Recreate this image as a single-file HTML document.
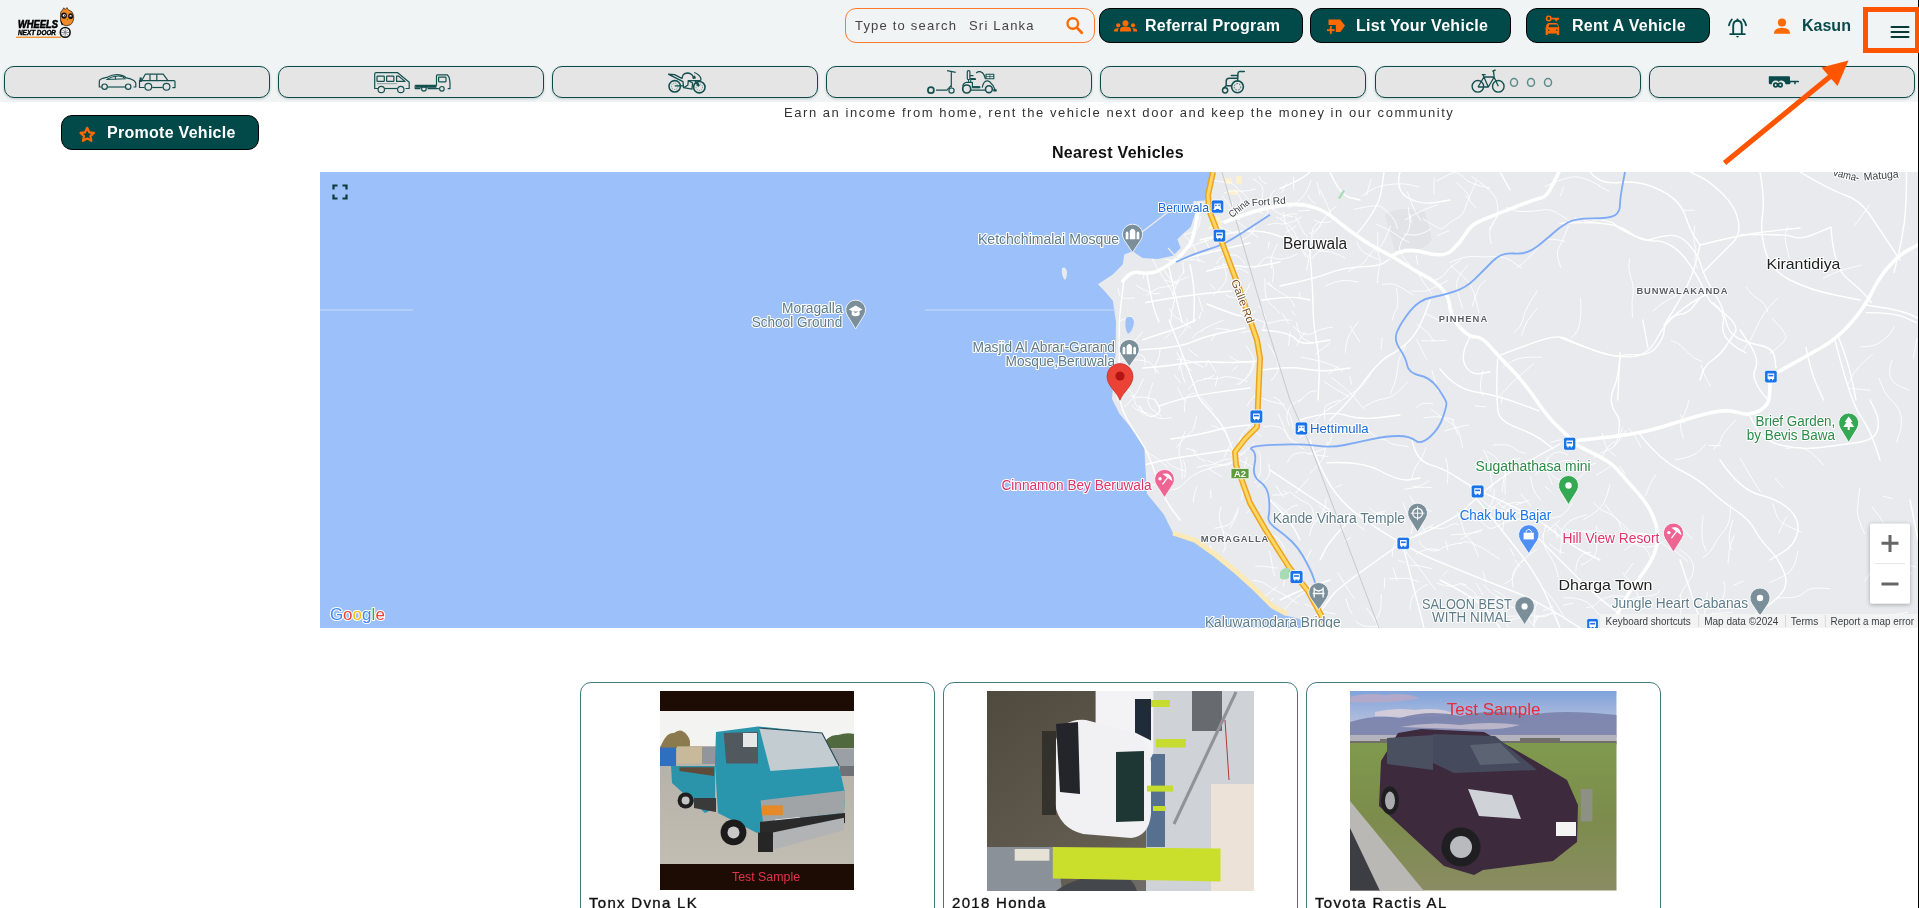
<!DOCTYPE html>
<html><head><meta charset="utf-8">
<style>
*{box-sizing:border-box;margin:0;padding:0}
html,body{width:1919px;height:908px;overflow:hidden;background:#fff;font-family:"Liberation Sans",sans-serif}
body>*{will-change:transform}
.abs{position:absolute;white-space:nowrap}
#hdr{position:absolute;left:0;top:0;width:1919px;height:102px;background:#f0f4f5}
.search{position:absolute;left:845px;top:8px;width:250px;height:35px;border:1px solid #ff7a2a;border-radius:11px}
.ph{position:absolute;top:18px;font-size:13px;color:#444;letter-spacing:1.2px;white-space:nowrap}
.tbtn{position:absolute;top:8px;height:35px;background:#024a4a;border:1px solid #000;border-radius:11px}
.bt{position:absolute;color:#fff;font-weight:bold;font-size:16px;letter-spacing:0.28px;white-space:nowrap}
.cat{position:absolute;top:66px;width:266px;height:32px;background:#e5e5e5;border:1.5px solid #0b4a4a;border-radius:10px;box-shadow:0 1px 3px rgba(0,0,0,0.18)}
.card{position:absolute;top:682px;width:355px;height:260px;border:1.5px solid #3f7d7d;border-radius:11px;background:#fff}
.ttl{position:absolute;top:894px;font-weight:normal;font-size:15px;color:#111;white-space:nowrap;letter-spacing:1.3px;-webkit-text-stroke:0.35px #111}
#ov{position:absolute;left:0;top:0}
.ml{font-family:"Liberation Sans",sans-serif;paint-order:stroke;stroke:#fff;stroke-width:2.2px;stroke-linejoin:round}
</style></head><body>
<div id="hdr">
  <div class="search"></div>
  <div class="tbtn" style="left:1099px;width:204px"></div>
  <div class="tbtn" style="left:1310px;width:201px"></div>
  <div class="tbtn" style="left:1526px;width:184px"></div>
  <div class="cat" style="left:4px"></div>
  <div class="cat" style="left:278px"></div>
  <div class="cat" style="left:552px"></div>
  <div class="cat" style="left:826px"></div>
  <div class="cat" style="left:1100px"></div>
  <div class="cat" style="left:1375px"></div>
  <div class="cat" style="left:1649px"></div>
</div>
<div class="tbtn" style="left:61px;top:115px;width:198px;height:35px"></div>
<div class="card" style="left:580px"></div>
<div class="card" style="left:943px"></div>
<div class="card" style="left:1306px"></div>
<svg id="ov" width="1919" height="908" viewBox="0 0 1919 908">
<clipPath id="mc"><rect x="320" y="172" width="1598" height="456"/></clipPath>
<g clip-path="url(#mc)">
<rect x="320" y="172" width="1598" height="456" fill="#e8eaed"/>
<path d="M1385,215 Q1400,205 1425,212 L1432,240 Q1420,255 1395,250 Z" fill="#e1e3e7"/>
<path d="M1224,178 h8 v6 h-8z M1236,176 h6 v8 h-6z M1228,190 h10 v5 h-10z M1210,222 q3,-6 10,-6 l2,14 q-7,2 -12,-2z" fill="#fbf0cf"/>
<path d="M1178.1,283.2 L1164.4,280.2" fill="none" stroke="#fff" stroke-width="1" stroke-opacity="0.85" stroke-linecap="round"/>
<path d="M1228.6,450.1 L1236.8,455.4" fill="none" stroke="#fff" stroke-width="1" stroke-opacity="0.85" stroke-linecap="round"/>
<path d="M1132.7,343.4 L1142.8,331.8" fill="none" stroke="#fff" stroke-width="1" stroke-opacity="0.85" stroke-linecap="round"/>
<path d="M1228.7,263.6 L1213.6,267.9" fill="none" stroke="#fff" stroke-width="1" stroke-opacity="0.85" stroke-linecap="round"/>
<path d="M1282.4,313.7 L1288.4,323.3" fill="none" stroke="#fff" stroke-width="1" stroke-opacity="0.85" stroke-linecap="round"/>
<path d="M1248.0,272.7 Q1240.2,268.0 1237.5,268.8 L1234.7,269.5" fill="none" stroke="#fff" stroke-width="1" stroke-opacity="0.85" stroke-linecap="round"/>
<path d="M1155.2,399.7 Q1145.5,396.6 1141.0,397.2 Q1136.6,397.9 1133.3,396.7 L1130.1,395.5" fill="none" stroke="#fff" stroke-width="1" stroke-opacity="0.85" stroke-linecap="round"/>
<path d="M1131.0,316.1 L1119.0,321.3" fill="none" stroke="#fff" stroke-width="1" stroke-opacity="0.85" stroke-linecap="round"/>
<path d="M1196.5,416.6 Q1194.5,426.0 1193.5,428.8 Q1192.6,431.5 1187.3,435.8 Q1182.0,440.1 1179.5,443.6 L1176.9,447.2" fill="none" stroke="#fff" stroke-width="1" stroke-opacity="0.85" stroke-linecap="round"/>
<path d="M1211.9,425.3 L1226.1,431.1" fill="none" stroke="#fff" stroke-width="1" stroke-opacity="0.85" stroke-linecap="round"/>
<path d="M1244.5,263.3 Q1240.5,256.3 1234.5,255.1 Q1228.4,253.8 1223.8,255.8 Q1219.1,257.7 1217.9,260.6 L1216.8,263.5" fill="none" stroke="#fff" stroke-width="1" stroke-opacity="0.85" stroke-linecap="round"/>
<path d="M1264.8,278.5 Q1265.1,293.5 1265.8,296.9 Q1266.5,300.2 1269.5,302.9 Q1272.5,305.5 1275.9,309.1 L1279.3,312.6" fill="none" stroke="#fff" stroke-width="1" stroke-opacity="0.85" stroke-linecap="round"/>
<path d="M1252.7,467.0 Q1239.3,459.3 1235.8,459.1 Q1232.3,459.0 1228.5,459.0 Q1224.8,459.0 1219.5,461.3 L1214.3,463.6" fill="none" stroke="#fff" stroke-width="1" stroke-opacity="0.85" stroke-linecap="round"/>
<path d="M1215.5,385.9 L1217.6,376.1" fill="none" stroke="#fff" stroke-width="1" stroke-opacity="0.85" stroke-linecap="round"/>
<path d="M1300.6,399.7 Q1291.8,402.9 1289.2,408.3 Q1286.7,413.7 1286.9,416.5 Q1287.1,419.4 1288.3,422.5 L1289.6,425.7" fill="none" stroke="#fff" stroke-width="1" stroke-opacity="0.85" stroke-linecap="round"/>
<path d="M1144.5,272.3 L1143.4,278.0" fill="none" stroke="#fff" stroke-width="1" stroke-opacity="0.85" stroke-linecap="round"/>
<path d="M1188.4,389.6 Q1194.1,381.1 1199.2,380.6 Q1204.4,380.0 1209.1,377.8 L1213.7,375.5" fill="none" stroke="#fff" stroke-width="1" stroke-opacity="0.85" stroke-linecap="round"/>
<path d="M1143.1,414.9 Q1134.3,403.9 1134.7,401.3 Q1135.1,398.7 1132.5,393.9 Q1129.9,389.1 1124.6,387.9 L1119.3,386.7" fill="none" stroke="#fff" stroke-width="1" stroke-opacity="0.85" stroke-linecap="round"/>
<path d="M1218.0,465.3 Q1228.6,463.9 1232.2,461.3 Q1235.8,458.7 1240.3,455.5 L1244.8,452.4" fill="none" stroke="#fff" stroke-width="1" stroke-opacity="0.85" stroke-linecap="round"/>
<path d="M1239.1,384.9 Q1249.2,375.4 1251.3,369.1 L1253.4,362.9" fill="none" stroke="#fff" stroke-width="1" stroke-opacity="0.85" stroke-linecap="round"/>
<path d="M1215.9,328.2 L1229.5,330.0" fill="none" stroke="#fff" stroke-width="1" stroke-opacity="0.85" stroke-linecap="round"/>
<path d="M1152.8,383.1 Q1147.5,397.7 1148.0,401.4 Q1148.5,405.1 1150.8,407.9 L1153.0,410.6" fill="none" stroke="#fff" stroke-width="1" stroke-opacity="0.85" stroke-linecap="round"/>
<path d="M1236.7,448.1 Q1240.9,433.7 1245.6,429.9 Q1250.3,426.1 1252.3,423.6 Q1254.3,421.2 1255.2,414.9 L1256.2,408.5" fill="none" stroke="#fff" stroke-width="1" stroke-opacity="0.85" stroke-linecap="round"/>
<path d="M1288.4,345.5 L1290.2,331.8" fill="none" stroke="#fff" stroke-width="1" stroke-opacity="0.85" stroke-linecap="round"/>
<path d="M1192.2,338.3 Q1195.9,332.5 1199.1,331.6 L1202.3,330.7" fill="none" stroke="#fff" stroke-width="1" stroke-opacity="0.85" stroke-linecap="round"/>
<path d="M1272.3,282.2 Q1274.8,270.2 1272.4,265.2 Q1270.0,260.3 1271.0,257.9 Q1272.0,255.5 1274.6,250.0 L1277.2,244.5" fill="none" stroke="#fff" stroke-width="1" stroke-opacity="0.85" stroke-linecap="round"/>
<path d="M1297.1,345.4 Q1298.4,340.3 1301.8,336.4 L1305.3,332.4" fill="none" stroke="#fff" stroke-width="1" stroke-opacity="0.85" stroke-linecap="round"/>
<path d="M1178.6,369.8 L1182.5,355.3" fill="none" stroke="#fff" stroke-width="1" stroke-opacity="0.85" stroke-linecap="round"/>
<path d="M1204.3,378.3 Q1218.4,379.5 1221.2,377.8 Q1223.9,376.1 1229.2,376.8 Q1234.4,377.4 1240.8,379.5 L1247.3,381.7" fill="none" stroke="#fff" stroke-width="1" stroke-opacity="0.85" stroke-linecap="round"/>
<path d="M1266.3,283.0 L1275.7,289.0" fill="none" stroke="#fff" stroke-width="1" stroke-opacity="0.85" stroke-linecap="round"/>
<path d="M1216.1,372.2 L1208.0,359.9" fill="none" stroke="#fff" stroke-width="1" stroke-opacity="0.85" stroke-linecap="round"/>
<path d="M1152.3,259.3 Q1157.6,269.2 1161.8,275.4 Q1165.9,281.6 1169.2,286.6 Q1172.4,291.5 1173.6,296.6 L1174.8,301.8" fill="none" stroke="#fff" stroke-width="1" stroke-opacity="0.85" stroke-linecap="round"/>
<path d="M1203.2,367.3 Q1192.3,360.8 1184.7,360.0 L1177.0,359.2" fill="none" stroke="#fff" stroke-width="1" stroke-opacity="0.85" stroke-linecap="round"/>
<path d="M1224.1,457.5 Q1227.6,448.6 1230.2,445.3 L1232.9,442.0" fill="none" stroke="#fff" stroke-width="1" stroke-opacity="0.85" stroke-linecap="round"/>
<path d="M1198.5,296.8 L1202.8,311.0" fill="none" stroke="#fff" stroke-width="1" stroke-opacity="0.85" stroke-linecap="round"/>
<path d="M1254.6,395.3 Q1269.1,401.3 1276.7,402.9 L1284.2,404.5" fill="none" stroke="#fff" stroke-width="1" stroke-opacity="0.85" stroke-linecap="round"/>
<path d="M1210.0,467.8 Q1222.6,465.7 1227.1,464.3 L1231.6,462.9" fill="none" stroke="#fff" stroke-width="1" stroke-opacity="0.85" stroke-linecap="round"/>
<path d="M1184.5,270.3 Q1178.1,279.3 1177.3,281.8 Q1176.5,284.2 1174.5,289.8 L1172.5,295.4" fill="none" stroke="#fff" stroke-width="1" stroke-opacity="0.85" stroke-linecap="round"/>
<path d="M1268.7,463.8 Q1270.2,471.6 1269.2,475.0 Q1268.3,478.4 1262.8,482.7 L1257.2,487.0" fill="none" stroke="#fff" stroke-width="1" stroke-opacity="0.85" stroke-linecap="round"/>
<path d="M1246.8,458.1 Q1243.8,470.5 1242.2,472.9 Q1240.7,475.2 1241.6,479.9 Q1242.5,484.7 1242.1,492.4 L1241.7,500.0" fill="none" stroke="#fff" stroke-width="1" stroke-opacity="0.85" stroke-linecap="round"/>
<path d="M1271.3,268.4 L1271.2,260.5" fill="none" stroke="#fff" stroke-width="1" stroke-opacity="0.85" stroke-linecap="round"/>
<path d="M1196.5,451.4 L1186.1,448.3" fill="none" stroke="#fff" stroke-width="1" stroke-opacity="0.85" stroke-linecap="round"/>
<path d="M1136.3,285.5 Q1149.4,293.5 1154.8,293.6 L1160.2,293.7" fill="none" stroke="#fff" stroke-width="1" stroke-opacity="0.85" stroke-linecap="round"/>
<path d="M1201.9,397.9 L1212.2,410.0" fill="none" stroke="#fff" stroke-width="1" stroke-opacity="0.85" stroke-linecap="round"/>
<path d="M1118.6,361.2 Q1126.1,359.5 1132.2,359.7 Q1138.3,359.9 1144.4,360.6 Q1150.5,361.4 1154.7,367.4 L1158.9,373.5" fill="none" stroke="#fff" stroke-width="1" stroke-opacity="0.85" stroke-linecap="round"/>
<path d="M1175.0,297.3 Q1171.6,311.1 1171.2,317.1 L1170.7,323.0" fill="none" stroke="#fff" stroke-width="1" stroke-opacity="0.85" stroke-linecap="round"/>
<path d="M1182.8,262.0 L1183.6,273.8" fill="none" stroke="#fff" stroke-width="1" stroke-opacity="0.85" stroke-linecap="round"/>
<path d="M1199.0,262.2 Q1195.7,248.0 1193.2,244.8 Q1190.6,241.7 1187.8,238.8 L1184.9,235.8" fill="none" stroke="#fff" stroke-width="1" stroke-opacity="0.85" stroke-linecap="round"/>
<path d="M1166.3,461.6 Q1172.4,466.3 1176.2,468.0 Q1180.1,469.7 1182.5,470.2 L1185.0,470.7" fill="none" stroke="#fff" stroke-width="1" stroke-opacity="0.85" stroke-linecap="round"/>
<path d="M1207.6,360.6 L1206.0,366.4" fill="none" stroke="#fff" stroke-width="1" stroke-opacity="0.85" stroke-linecap="round"/>
<path d="M1143.1,379.1 Q1139.6,386.7 1137.0,391.8 Q1134.4,396.9 1129.8,401.7 L1125.2,406.5" fill="none" stroke="#fff" stroke-width="1" stroke-opacity="0.85" stroke-linecap="round"/>
<path d="M1254.6,443.4 Q1244.8,451.8 1241.2,453.7 Q1237.6,455.6 1234.3,455.3 L1231.0,455.0" fill="none" stroke="#fff" stroke-width="1" stroke-opacity="0.85" stroke-linecap="round"/>
<path d="M1254.4,362.9 Q1239.4,362.7 1234.7,359.6 L1230.0,356.6" fill="none" stroke="#fff" stroke-width="1" stroke-opacity="0.85" stroke-linecap="round"/>
<path d="M1118.1,401.0 Q1115.2,395.9 1117.0,390.1 L1118.8,384.4" fill="none" stroke="#fff" stroke-width="1" stroke-opacity="0.85" stroke-linecap="round"/>
<path d="M1188.4,349.3 L1197.9,356.4" fill="none" stroke="#fff" stroke-width="1" stroke-opacity="0.85" stroke-linecap="round"/>
<path d="M1210.4,250.7 L1204.7,239.9" fill="none" stroke="#fff" stroke-width="1" stroke-opacity="0.85" stroke-linecap="round"/>
<path d="M1258.7,305.5 Q1263.2,311.6 1264.6,315.1 Q1265.9,318.6 1264.7,323.5 L1263.5,328.3" fill="none" stroke="#fff" stroke-width="1" stroke-opacity="0.85" stroke-linecap="round"/>
<path d="M1171.0,260.3 L1165.3,259.1" fill="none" stroke="#fff" stroke-width="1" stroke-opacity="0.85" stroke-linecap="round"/>
<path d="M1174.4,374.9 L1180.6,383.2" fill="none" stroke="#fff" stroke-width="1" stroke-opacity="0.85" stroke-linecap="round"/>
<path d="M1134.4,297.9 Q1124.4,299.2 1121.8,297.4 Q1119.1,295.7 1118.7,292.1 L1118.2,288.6" fill="none" stroke="#fff" stroke-width="1" stroke-opacity="0.85" stroke-linecap="round"/>
<path d="M1297.6,253.9 Q1283.3,260.9 1276.2,258.6 Q1269.0,256.3 1266.3,257.5 Q1263.7,258.7 1259.3,263.6 L1255.0,268.6" fill="none" stroke="#fff" stroke-width="1" stroke-opacity="0.85" stroke-linecap="round"/>
<path d="M1185.1,382.7 Q1179.7,369.0 1181.0,365.4 Q1182.2,361.9 1179.7,357.4 L1177.1,352.9" fill="none" stroke="#fff" stroke-width="1" stroke-opacity="0.85" stroke-linecap="round"/>
<path d="M1188.3,276.6 Q1176.4,282.4 1173.4,281.4 Q1170.4,280.4 1167.2,274.9 L1163.9,269.3" fill="none" stroke="#fff" stroke-width="1" stroke-opacity="0.85" stroke-linecap="round"/>
<path d="M1171.5,331.9 L1165.3,338.3" fill="none" stroke="#fff" stroke-width="1" stroke-opacity="0.85" stroke-linecap="round"/>
<path d="M1168.7,260.6 Q1180.6,260.7 1188.4,259.9 Q1196.2,259.0 1200.2,260.6 L1204.1,262.2" fill="none" stroke="#fff" stroke-width="1" stroke-opacity="0.85" stroke-linecap="round"/>
<path d="M1268.1,344.1 Q1276.5,356.6 1277.6,362.0 Q1278.7,367.4 1278.1,370.1 Q1277.5,372.8 1274.4,376.7 L1271.3,380.6" fill="none" stroke="#fff" stroke-width="1" stroke-opacity="0.85" stroke-linecap="round"/>
<path d="M1240.7,313.0 Q1247.5,314.0 1251.3,312.9 L1255.2,311.7" fill="none" stroke="#fff" stroke-width="1" stroke-opacity="0.85" stroke-linecap="round"/>
<path d="M1259.1,393.6 Q1251.7,397.5 1249.5,401.6 L1247.3,405.8" fill="none" stroke="#fff" stroke-width="1" stroke-opacity="0.85" stroke-linecap="round"/>
<path d="M1146.5,295.7 Q1155.1,288.8 1159.3,287.9 Q1163.6,287.0 1168.4,286.4 Q1173.3,285.8 1176.2,283.3 L1179.1,280.8" fill="none" stroke="#fff" stroke-width="1" stroke-opacity="0.85" stroke-linecap="round"/>
<path d="M1223.4,320.2 Q1209.7,325.7 1205.6,328.1 L1201.5,330.5" fill="none" stroke="#fff" stroke-width="1" stroke-opacity="0.85" stroke-linecap="round"/>
<path d="M1217.2,332.9 L1210.6,341.0" fill="none" stroke="#fff" stroke-width="1" stroke-opacity="0.85" stroke-linecap="round"/>
<path d="M1185.2,401.1 Q1181.5,396.4 1179.7,392.1 L1177.8,387.9" fill="none" stroke="#fff" stroke-width="1" stroke-opacity="0.85" stroke-linecap="round"/>
<path d="M1199.2,318.6 L1200.9,312.5" fill="none" stroke="#fff" stroke-width="1" stroke-opacity="0.85" stroke-linecap="round"/>
<path d="M1263.9,426.9 Q1268.5,425.0 1276.0,426.4 Q1283.5,427.9 1287.1,434.1 Q1290.7,440.3 1294.3,441.6 L1298.0,442.9" fill="none" stroke="#fff" stroke-width="1" stroke-opacity="0.85" stroke-linecap="round"/>
<path d="M1145.1,364.9 Q1145.5,359.0 1144.1,356.9 Q1142.7,354.9 1137.1,354.1 Q1131.5,353.3 1127.8,348.0 L1124.2,342.7" fill="none" stroke="#fff" stroke-width="1" stroke-opacity="0.85" stroke-linecap="round"/>
<path d="M1237.2,366.2 L1232.7,370.4" fill="none" stroke="#fff" stroke-width="1" stroke-opacity="0.85" stroke-linecap="round"/>
<path d="M1299.0,292.2 L1300.4,297.1" fill="none" stroke="#fff" stroke-width="1" stroke-opacity="0.85" stroke-linecap="round"/>
<path d="M1204.8,461.0 Q1195.5,456.7 1194.3,453.0 L1193.2,449.3" fill="none" stroke="#fff" stroke-width="1" stroke-opacity="0.85" stroke-linecap="round"/>
<path d="M1252.4,317.6 Q1266.0,323.4 1268.9,323.1 Q1271.8,322.9 1276.4,321.4 Q1281.0,319.8 1286.2,320.0 L1291.4,320.1" fill="none" stroke="#fff" stroke-width="1" stroke-opacity="0.85" stroke-linecap="round"/>
<path d="M1255.1,329.7 L1241.6,332.7" fill="none" stroke="#fff" stroke-width="1" stroke-opacity="0.85" stroke-linecap="round"/>
<path d="M1213.5,295.1 Q1223.4,286.1 1225.4,281.5 Q1227.4,276.8 1225.2,269.8 L1223.1,262.7" fill="none" stroke="#fff" stroke-width="1" stroke-opacity="0.85" stroke-linecap="round"/>
<path d="M1236.6,384.2 Q1245.6,380.9 1249.8,374.4 Q1254.1,368.0 1254.4,363.4 Q1254.7,358.7 1250.4,352.1 L1246.1,345.6" fill="none" stroke="#fff" stroke-width="1" stroke-opacity="0.85" stroke-linecap="round"/>
<path d="M1296.7,322.4 Q1297.2,327.8 1298.8,332.1 Q1300.3,336.4 1303.8,339.0 Q1307.2,341.6 1309.7,342.2 L1312.1,342.8" fill="none" stroke="#fff" stroke-width="1" stroke-opacity="0.85" stroke-linecap="round"/>
<path d="M1183.5,460.2 Q1186.3,469.0 1185.3,473.1 L1184.4,477.1" fill="none" stroke="#fff" stroke-width="1" stroke-opacity="0.85" stroke-linecap="round"/>
<path d="M1132.1,405.2 Q1136.0,411.1 1143.4,412.1 Q1150.8,413.2 1154.4,416.2 Q1158.0,419.3 1164.7,418.5 L1171.4,417.6" fill="none" stroke="#fff" stroke-width="1" stroke-opacity="0.85" stroke-linecap="round"/>
<path d="M1294.4,306.5 Q1291.6,298.0 1284.6,294.8 Q1277.6,291.5 1272.9,286.9 L1268.2,282.2" fill="none" stroke="#fff" stroke-width="1" stroke-opacity="0.85" stroke-linecap="round"/>
<path d="M1295.2,315.4 L1292.0,311.3" fill="none" stroke="#fff" stroke-width="1" stroke-opacity="0.85" stroke-linecap="round"/>
<path d="M1207.7,460.5 Q1220.0,466.5 1226.8,465.1 Q1233.6,463.6 1236.0,459.0 Q1238.5,454.4 1239.5,446.8 L1240.4,439.2" fill="none" stroke="#fff" stroke-width="1" stroke-opacity="0.85" stroke-linecap="round"/>
<path d="M1250.0,283.3 Q1245.8,292.5 1243.3,297.7 Q1240.8,302.9 1241.6,307.5 L1242.4,312.1" fill="none" stroke="#fff" stroke-width="1" stroke-opacity="0.85" stroke-linecap="round"/>
<path d="M1194.5,392.9 Q1188.0,394.6 1186.3,397.2 Q1184.7,399.8 1184.6,405.8 L1184.4,411.7" fill="none" stroke="#fff" stroke-width="1" stroke-opacity="0.85" stroke-linecap="round"/>
<path d="M1197.1,467.5 Q1204.3,465.0 1210.2,464.9 L1216.1,464.9" fill="none" stroke="#fff" stroke-width="1" stroke-opacity="0.85" stroke-linecap="round"/>
<path d="M1260.9,436.3 L1250.1,428.0" fill="none" stroke="#fff" stroke-width="1" stroke-opacity="0.85" stroke-linecap="round"/>
<path d="M1169.5,308.9 Q1172.5,315.4 1175.8,317.3 Q1179.2,319.2 1185.0,323.7 L1190.8,328.2" fill="none" stroke="#fff" stroke-width="1" stroke-opacity="0.85" stroke-linecap="round"/>
<path d="M1178.6,337.1 Q1187.4,328.7 1187.2,323.6 L1187.1,318.6" fill="none" stroke="#fff" stroke-width="1" stroke-opacity="0.85" stroke-linecap="round"/>
<path d="M1160.1,348.6 Q1160.3,356.2 1157.2,361.1 Q1154.1,366.0 1154.8,369.5 L1155.6,373.0" fill="none" stroke="#fff" stroke-width="1" stroke-opacity="0.85" stroke-linecap="round"/>
<path d="M1215.0,289.1 L1210.8,284.6" fill="none" stroke="#fff" stroke-width="1" stroke-opacity="0.85" stroke-linecap="round"/>
<path d="M1235.9,297.9 Q1230.4,297.5 1228.0,296.2 L1225.6,294.9" fill="none" stroke="#fff" stroke-width="1" stroke-opacity="0.85" stroke-linecap="round"/>
<path d="M1293.2,429.2 Q1291.6,416.9 1288.9,413.6 Q1286.3,410.3 1282.5,404.6 Q1278.8,398.8 1276.0,398.1 L1273.3,397.3" fill="none" stroke="#fff" stroke-width="1" stroke-opacity="0.85" stroke-linecap="round"/>
<path d="M1192.1,371.0 L1182.7,363.3" fill="none" stroke="#fff" stroke-width="1" stroke-opacity="0.85" stroke-linecap="round"/>
<path d="M1167.9,467.4 Q1156.2,457.2 1151.2,454.8 Q1146.1,452.3 1144.0,448.0 L1141.9,443.7" fill="none" stroke="#fff" stroke-width="1" stroke-opacity="0.85" stroke-linecap="round"/>
<path d="M1153.5,410.2 L1161.2,416.2" fill="none" stroke="#fff" stroke-width="1" stroke-opacity="0.85" stroke-linecap="round"/>
<path d="M1158.2,484.3 L1148.2,485.5" fill="none" stroke="#fff" stroke-width="1" stroke-opacity="0.85" stroke-linecap="round"/>
<path d="M1171.6,490.0 Q1179.9,488.6 1183.6,483.9 Q1187.3,479.2 1192.7,475.7 Q1198.1,472.2 1205.2,469.9 L1212.2,467.6" fill="none" stroke="#fff" stroke-width="1" stroke-opacity="0.85" stroke-linecap="round"/>
<path d="M1277.1,568.1 Q1263.1,566.0 1259.4,566.1 L1255.7,566.2" fill="none" stroke="#fff" stroke-width="1" stroke-opacity="0.85" stroke-linecap="round"/>
<path d="M1222.9,530.6 Q1226.4,545.9 1224.8,549.0 L1223.3,552.2" fill="none" stroke="#fff" stroke-width="1" stroke-opacity="0.85" stroke-linecap="round"/>
<path d="M1274.8,576.2 Q1272.7,570.3 1272.1,564.8 Q1271.5,559.3 1270.5,555.2 L1269.4,551.2" fill="none" stroke="#fff" stroke-width="1" stroke-opacity="0.85" stroke-linecap="round"/>
<path d="M1233.2,537.3 Q1223.6,533.0 1222.9,530.5 Q1222.2,528.1 1220.3,523.4 Q1218.5,518.7 1219.7,512.9 L1220.9,507.1" fill="none" stroke="#fff" stroke-width="1" stroke-opacity="0.85" stroke-linecap="round"/>
<path d="M1273.8,598.1 L1269.2,602.4" fill="none" stroke="#fff" stroke-width="1" stroke-opacity="0.85" stroke-linecap="round"/>
<path d="M1221.6,476.4 L1208.5,468.9" fill="none" stroke="#fff" stroke-width="1" stroke-opacity="0.85" stroke-linecap="round"/>
<path d="M1255.3,482.6 Q1261.4,472.1 1260.7,469.6 Q1260.0,467.0 1260.5,461.1 Q1261.1,455.3 1259.4,452.7 L1257.7,450.1" fill="none" stroke="#fff" stroke-width="1" stroke-opacity="0.85" stroke-linecap="round"/>
<path d="M1281.7,515.5 Q1290.5,506.6 1294.2,505.9 L1297.8,505.2" fill="none" stroke="#fff" stroke-width="1" stroke-opacity="0.85" stroke-linecap="round"/>
<path d="M1237.7,509.9 Q1232.0,523.7 1228.3,525.0 Q1224.7,526.4 1219.7,527.3 L1214.6,528.3" fill="none" stroke="#fff" stroke-width="1" stroke-opacity="0.85" stroke-linecap="round"/>
<path d="M1238.5,507.5 Q1237.4,514.4 1233.8,521.2 L1230.3,528.0" fill="none" stroke="#fff" stroke-width="1" stroke-opacity="0.85" stroke-linecap="round"/>
<path d="M1283.3,496.7 L1275.7,485.5" fill="none" stroke="#fff" stroke-width="1" stroke-opacity="0.85" stroke-linecap="round"/>
<path d="M1212.5,552.4 L1210.0,545.0" fill="none" stroke="#fff" stroke-width="1" stroke-opacity="0.85" stroke-linecap="round"/>
<path d="M1277.1,586.6 L1264.6,596.4" fill="none" stroke="#fff" stroke-width="1" stroke-opacity="0.85" stroke-linecap="round"/>
<path d="M1210.8,497.9 L1210.7,489.7" fill="none" stroke="#fff" stroke-width="1" stroke-opacity="0.85" stroke-linecap="round"/>
<path d="M1283.3,585.8 Q1284.6,579.3 1285.6,574.5 L1286.6,569.8" fill="none" stroke="#fff" stroke-width="1" stroke-opacity="0.85" stroke-linecap="round"/>
<path d="M1283.3,490.9 L1287.8,493.5" fill="none" stroke="#fff" stroke-width="1" stroke-opacity="0.85" stroke-linecap="round"/>
<path d="M1196.8,486.8 Q1193.8,495.9 1193.6,499.1 L1193.4,502.3" fill="none" stroke="#fff" stroke-width="1" stroke-opacity="0.85" stroke-linecap="round"/>
<path d="M1272.6,495.1 Q1285.3,495.1 1287.6,493.4 L1289.9,491.7" fill="none" stroke="#fff" stroke-width="1" stroke-opacity="0.85" stroke-linecap="round"/>
<path d="M1246.5,512.6 L1251.1,509.4" fill="none" stroke="#fff" stroke-width="1" stroke-opacity="0.85" stroke-linecap="round"/>
<path d="M1282.8,564.0 Q1280.2,556.7 1279.4,554.1 Q1278.6,551.5 1275.3,548.0 Q1272.0,544.6 1271.2,541.9 L1270.5,539.2" fill="none" stroke="#fff" stroke-width="1" stroke-opacity="0.85" stroke-linecap="round"/>
<path d="M1290.5,492.5 Q1301.5,501.1 1305.5,502.4 Q1309.5,503.7 1311.0,506.0 Q1312.5,508.4 1313.7,515.1 L1314.8,521.8" fill="none" stroke="#fff" stroke-width="1" stroke-opacity="0.85" stroke-linecap="round"/>
<path d="M1259.2,543.5 Q1264.4,538.9 1267.9,537.1 Q1271.4,535.3 1274.5,536.0 Q1277.6,536.8 1281.5,543.3 L1285.4,549.8" fill="none" stroke="#fff" stroke-width="1" stroke-opacity="0.85" stroke-linecap="round"/>
<path d="M1182.1,478.3 Q1182.6,465.8 1180.0,458.4 Q1177.4,450.9 1180.2,443.9 Q1183.0,436.8 1184.1,434.1 L1185.2,431.3" fill="none" stroke="#fff" stroke-width="1" stroke-opacity="0.85" stroke-linecap="round"/>
<path d="M1274.7,502.0 Q1279.6,507.1 1284.4,510.3 Q1289.3,513.5 1290.9,520.5 L1292.6,527.5" fill="none" stroke="#fff" stroke-width="1" stroke-opacity="0.85" stroke-linecap="round"/>
<path d="M1297.1,603.0 Q1285.2,595.1 1278.8,591.9 Q1272.3,588.6 1266.9,585.0 Q1261.6,581.3 1257.4,581.0 L1253.2,580.6" fill="none" stroke="#fff" stroke-width="1" stroke-opacity="0.85" stroke-linecap="round"/>
<path d="M1239.6,482.3 Q1241.3,477.2 1239.5,471.5 L1237.8,465.9" fill="none" stroke="#fff" stroke-width="1" stroke-opacity="0.85" stroke-linecap="round"/>
<path d="M1296.4,580.7 Q1307.8,586.0 1311.9,590.8 L1316.1,595.6" fill="none" stroke="#fff" stroke-width="1" stroke-opacity="0.85" stroke-linecap="round"/>
<path d="M1586.8,607.6 Q1594.1,606.7 1596.2,603.7 Q1598.3,600.7 1605.8,597.7 Q1613.3,594.6 1619.9,595.9 L1626.6,597.2" fill="none" stroke="#fff" stroke-width="1" stroke-opacity="0.85" stroke-linecap="round"/>
<path d="M1521.0,494.0 L1530.8,506.1" fill="none" stroke="#fff" stroke-width="1" stroke-opacity="0.85" stroke-linecap="round"/>
<path d="M1403.1,503.3 Q1405.9,511.9 1409.8,518.1 Q1413.7,524.3 1412.3,529.0 L1411.0,533.7" fill="none" stroke="#fff" stroke-width="1" stroke-opacity="0.85" stroke-linecap="round"/>
<path d="M1476.3,600.1 L1460.9,601.6" fill="none" stroke="#fff" stroke-width="1" stroke-opacity="0.85" stroke-linecap="round"/>
<path d="M1481.5,458.5 L1472.0,466.6" fill="none" stroke="#fff" stroke-width="1" stroke-opacity="0.85" stroke-linecap="round"/>
<path d="M1601.8,457.1 Q1607.0,447.1 1610.8,444.3 L1614.6,441.5" fill="none" stroke="#fff" stroke-width="1" stroke-opacity="0.85" stroke-linecap="round"/>
<path d="M1318.9,505.4 Q1331.6,517.6 1337.7,523.9 L1343.8,530.1" fill="none" stroke="#fff" stroke-width="1" stroke-opacity="0.85" stroke-linecap="round"/>
<path d="M1502.3,469.9 Q1498.9,458.4 1493.0,455.0 L1487.0,451.6" fill="none" stroke="#fff" stroke-width="1" stroke-opacity="0.85" stroke-linecap="round"/>
<path d="M1575.8,571.1 Q1576.3,560.8 1580.0,556.9 Q1583.7,553.0 1587.2,552.6 L1590.7,552.2" fill="none" stroke="#fff" stroke-width="1" stroke-opacity="0.85" stroke-linecap="round"/>
<path d="M1308.8,478.7 Q1301.4,486.3 1298.6,489.6 L1295.7,493.0" fill="none" stroke="#fff" stroke-width="1" stroke-opacity="0.85" stroke-linecap="round"/>
<path d="M1486.0,581.8 L1483.1,572.1" fill="none" stroke="#fff" stroke-width="1" stroke-opacity="0.85" stroke-linecap="round"/>
<path d="M1354.4,598.5 Q1349.4,592.2 1345.6,585.5 Q1341.8,578.9 1339.8,575.8 L1337.7,572.7" fill="none" stroke="#fff" stroke-width="1" stroke-opacity="0.85" stroke-linecap="round"/>
<path d="M1609.8,484.7 Q1606.5,499.4 1602.6,504.9 Q1598.7,510.3 1591.2,514.9 L1583.6,519.5" fill="none" stroke="#fff" stroke-width="1" stroke-opacity="0.85" stroke-linecap="round"/>
<path d="M1511.0,505.5 Q1504.9,512.3 1503.8,521.2 L1502.6,530.1" fill="none" stroke="#fff" stroke-width="1" stroke-opacity="0.85" stroke-linecap="round"/>
<path d="M1530.3,476.7 Q1533.4,492.0 1537.2,496.1 L1541.0,500.2" fill="none" stroke="#fff" stroke-width="1" stroke-opacity="0.85" stroke-linecap="round"/>
<path d="M1523.3,460.1 Q1533.9,464.8 1541.7,467.2 Q1549.4,469.7 1551.1,473.7 Q1552.7,477.7 1557.2,479.1 L1561.8,480.6" fill="none" stroke="#fff" stroke-width="1" stroke-opacity="0.85" stroke-linecap="round"/>
<path d="M1390.0,578.8 Q1406.9,577.2 1412.9,579.5 L1418.9,581.8" fill="none" stroke="#fff" stroke-width="1" stroke-opacity="0.85" stroke-linecap="round"/>
<path d="M1447.4,483.0 Q1448.5,468.9 1447.0,463.4 L1445.6,457.8" fill="none" stroke="#fff" stroke-width="1" stroke-opacity="0.85" stroke-linecap="round"/>
<path d="M1519.9,458.4 Q1505.9,462.3 1501.8,464.1 Q1497.6,465.9 1492.0,467.0 Q1486.4,468.1 1481.0,467.4 L1475.5,466.7" fill="none" stroke="#fff" stroke-width="1" stroke-opacity="0.85" stroke-linecap="round"/>
<path d="M1625.6,474.4 L1619.4,465.7" fill="none" stroke="#fff" stroke-width="1" stroke-opacity="0.85" stroke-linecap="round"/>
<path d="M1641.1,447.2 Q1634.3,434.3 1631.4,431.2 L1628.5,428.2" fill="none" stroke="#fff" stroke-width="1" stroke-opacity="0.85" stroke-linecap="round"/>
<path d="M1596.5,525.9 Q1596.9,538.0 1596.8,546.0 Q1596.8,554.0 1592.8,557.8 Q1588.9,561.5 1585.0,563.2 L1581.1,565.0" fill="none" stroke="#fff" stroke-width="1" stroke-opacity="0.85" stroke-linecap="round"/>
<path d="M1437.4,583.4 Q1450.3,587.7 1455.0,585.4 Q1459.8,583.0 1463.1,584.0 L1466.4,584.9" fill="none" stroke="#fff" stroke-width="1" stroke-opacity="0.85" stroke-linecap="round"/>
<path d="M1520.0,566.9 L1514.9,559.9" fill="none" stroke="#fff" stroke-width="1" stroke-opacity="0.85" stroke-linecap="round"/>
<path d="M1629.0,539.1 Q1637.3,547.1 1645.8,547.1 Q1654.4,547.1 1661.0,543.0 Q1667.6,538.8 1674.4,537.8 L1681.2,536.7" fill="none" stroke="#fff" stroke-width="1" stroke-opacity="0.85" stroke-linecap="round"/>
<path d="M1585.1,467.5 Q1576.0,460.3 1569.8,460.3 Q1563.5,460.3 1555.8,462.4 Q1548.0,464.4 1541.7,469.5 L1535.4,474.7" fill="none" stroke="#fff" stroke-width="1" stroke-opacity="0.85" stroke-linecap="round"/>
<path d="M1431.7,487.7 Q1419.9,486.7 1412.2,488.0 L1404.6,489.3" fill="none" stroke="#fff" stroke-width="1" stroke-opacity="0.85" stroke-linecap="round"/>
<path d="M1529.0,500.2 L1515.9,504.9" fill="none" stroke="#fff" stroke-width="1" stroke-opacity="0.85" stroke-linecap="round"/>
<path d="M1625.1,600.6 Q1639.8,596.2 1647.8,595.9 Q1655.8,595.5 1657.7,593.0 L1659.5,590.5" fill="none" stroke="#fff" stroke-width="1" stroke-opacity="0.85" stroke-linecap="round"/>
<path d="M1633.1,563.3 L1625.4,573.7" fill="none" stroke="#fff" stroke-width="1" stroke-opacity="0.85" stroke-linecap="round"/>
<path d="M1365.0,525.0 Q1376.4,512.6 1380.4,512.1 L1384.4,511.6" fill="none" stroke="#fff" stroke-width="1" stroke-opacity="0.85" stroke-linecap="round"/>
<path d="M1512.9,586.9 Q1511.6,578.6 1513.2,572.7 Q1514.9,566.7 1519.5,563.5 L1524.1,560.2" fill="none" stroke="#fff" stroke-width="1" stroke-opacity="0.85" stroke-linecap="round"/>
<path d="M1494.3,489.7 Q1494.2,501.4 1490.2,505.8 L1486.3,510.2" fill="none" stroke="#fff" stroke-width="1" stroke-opacity="0.85" stroke-linecap="round"/>
<path d="M1545.1,486.4 L1551.1,491.5" fill="none" stroke="#fff" stroke-width="1" stroke-opacity="0.85" stroke-linecap="round"/>
<path d="M1543.6,533.6 Q1542.0,543.9 1547.0,551.0 Q1552.1,558.2 1554.6,564.6 Q1557.1,571.0 1557.7,574.1 L1558.2,577.2" fill="none" stroke="#fff" stroke-width="1" stroke-opacity="0.85" stroke-linecap="round"/>
<path d="M1538.9,615.1 L1533.3,625.9" fill="none" stroke="#fff" stroke-width="1" stroke-opacity="0.85" stroke-linecap="round"/>
<path d="M1614.1,446.4 Q1618.5,437.3 1620.5,432.6 L1622.6,427.8" fill="none" stroke="#fff" stroke-width="1" stroke-opacity="0.85" stroke-linecap="round"/>
<path d="M1483.9,584.9 Q1490.4,592.6 1493.3,594.2 Q1496.2,595.8 1500.8,598.2 Q1505.3,600.6 1506.3,605.5 L1507.4,610.4" fill="none" stroke="#fff" stroke-width="1" stroke-opacity="0.85" stroke-linecap="round"/>
<path d="M1605.5,504.8 Q1614.2,517.7 1618.2,520.5 Q1622.3,523.3 1626.5,528.2 Q1630.8,533.1 1638.5,533.4 L1646.2,533.6" fill="none" stroke="#fff" stroke-width="1" stroke-opacity="0.85" stroke-linecap="round"/>
<path d="M1552.9,606.5 L1543.1,610.9" fill="none" stroke="#fff" stroke-width="1" stroke-opacity="0.85" stroke-linecap="round"/>
<path d="M1316.2,594.5 L1303.3,586.0" fill="none" stroke="#fff" stroke-width="1" stroke-opacity="0.85" stroke-linecap="round"/>
<path d="M1514.1,555.9 L1510.2,548.3" fill="none" stroke="#fff" stroke-width="1" stroke-opacity="0.85" stroke-linecap="round"/>
<path d="M1460.3,583.4 Q1474.7,591.2 1475.8,594.7 L1476.8,598.1" fill="none" stroke="#fff" stroke-width="1" stroke-opacity="0.85" stroke-linecap="round"/>
<path d="M1304.7,603.9 Q1316.3,609.3 1320.9,610.7 Q1325.5,612.1 1330.3,613.0 L1335.1,613.8" fill="none" stroke="#fff" stroke-width="1" stroke-opacity="0.85" stroke-linecap="round"/>
<path d="M1524.6,615.6 L1535.3,627.4" fill="none" stroke="#fff" stroke-width="1" stroke-opacity="0.85" stroke-linecap="round"/>
<path d="M1447.4,570.8 L1443.1,575.2" fill="none" stroke="#fff" stroke-width="1" stroke-opacity="0.85" stroke-linecap="round"/>
<path d="M1507.2,616.3 Q1522.4,615.8 1525.9,615.5 Q1529.4,615.2 1537.7,616.4 Q1546.0,617.6 1550.1,613.9 L1554.2,610.2" fill="none" stroke="#fff" stroke-width="1" stroke-opacity="0.85" stroke-linecap="round"/>
<path d="M1534.3,625.5 Q1534.5,609.1 1535.8,606.2 L1537.0,603.4" fill="none" stroke="#fff" stroke-width="1" stroke-opacity="0.85" stroke-linecap="round"/>
<path d="M1384.8,577.9 L1384.3,588.3" fill="none" stroke="#fff" stroke-width="1" stroke-opacity="0.85" stroke-linecap="round"/>
<path d="M1543.2,467.2 Q1548.9,454.9 1554.3,452.9 Q1559.7,450.9 1563.7,453.0 L1567.7,455.1" fill="none" stroke="#fff" stroke-width="1" stroke-opacity="0.85" stroke-linecap="round"/>
<path d="M1551.0,442.1 L1561.4,439.6" fill="none" stroke="#fff" stroke-width="1" stroke-opacity="0.85" stroke-linecap="round"/>
<path d="M1510.0,620.0 L1519.6,617.8" fill="none" stroke="#fff" stroke-width="1" stroke-opacity="0.85" stroke-linecap="round"/>
<path d="M1554.7,528.3 L1557.4,538.3" fill="none" stroke="#fff" stroke-width="1" stroke-opacity="0.85" stroke-linecap="round"/>
<path d="M1520.4,518.6 Q1503.4,522.1 1498.1,525.6 Q1492.7,529.1 1489.5,528.2 Q1486.2,527.3 1481.5,521.8 L1476.8,516.3" fill="none" stroke="#fff" stroke-width="1" stroke-opacity="0.85" stroke-linecap="round"/>
<path d="M1416.2,553.9 Q1427.9,547.7 1433.3,548.9 L1438.8,550.1" fill="none" stroke="#fff" stroke-width="1" stroke-opacity="0.85" stroke-linecap="round"/>
<path d="M1431.8,568.7 Q1416.6,564.9 1413.7,565.4 L1410.7,565.9" fill="none" stroke="#fff" stroke-width="1" stroke-opacity="0.85" stroke-linecap="round"/>
<path d="M1447.9,550.3 L1445.7,541.1" fill="none" stroke="#fff" stroke-width="1" stroke-opacity="0.85" stroke-linecap="round"/>
<path d="M1493.8,589.9 Q1502.5,594.2 1506.1,598.2 L1509.7,602.2" fill="none" stroke="#fff" stroke-width="1" stroke-opacity="0.85" stroke-linecap="round"/>
<path d="M1624.1,550.2 Q1633.0,543.0 1640.7,541.5 Q1648.4,540.0 1652.8,539.8 Q1657.2,539.5 1663.9,544.5 L1670.6,549.6" fill="none" stroke="#fff" stroke-width="1" stroke-opacity="0.85" stroke-linecap="round"/>
<path d="M1482.7,529.6 Q1474.2,531.1 1467.6,535.2 L1460.9,539.3" fill="none" stroke="#fff" stroke-width="1" stroke-opacity="0.85" stroke-linecap="round"/>
<path d="M1502.3,507.5 Q1509.5,502.2 1515.5,502.4 L1521.4,502.7" fill="none" stroke="#fff" stroke-width="1" stroke-opacity="0.85" stroke-linecap="round"/>
<path d="M1430.1,527.1 Q1442.9,530.2 1447.8,526.6 Q1452.8,523.0 1455.9,523.8 L1459.0,524.6" fill="none" stroke="#fff" stroke-width="1" stroke-opacity="0.85" stroke-linecap="round"/>
<path d="M1603.1,531.4 Q1586.0,531.0 1582.5,531.2 Q1578.9,531.5 1572.4,530.6 L1565.9,529.8" fill="none" stroke="#fff" stroke-width="1" stroke-opacity="0.85" stroke-linecap="round"/>
<path d="M1345.8,598.6 Q1348.9,608.7 1350.5,611.5 L1352.1,614.3" fill="none" stroke="#fff" stroke-width="1" stroke-opacity="0.85" stroke-linecap="round"/>
<path d="M1546.9,531.5 L1559.3,520.8" fill="none" stroke="#fff" stroke-width="1" stroke-opacity="0.85" stroke-linecap="round"/>
<path d="M1622.8,572.8 Q1631.5,582.1 1635.2,590.0 Q1639.0,597.9 1641.8,602.5 L1644.5,607.1" fill="none" stroke="#fff" stroke-width="1" stroke-opacity="0.85" stroke-linecap="round"/>
<path d="M1355.9,621.6 Q1361.8,627.0 1370.4,626.6 L1379.1,626.2" fill="none" stroke="#fff" stroke-width="1" stroke-opacity="0.85" stroke-linecap="round"/>
<path d="M1493.5,445.2 Q1508.8,443.2 1513.8,447.9 Q1518.9,452.5 1522.2,452.9 L1525.6,453.2" fill="none" stroke="#fff" stroke-width="1" stroke-opacity="0.85" stroke-linecap="round"/>
<path d="M1564.2,616.6 Q1557.2,605.6 1553.2,600.0 Q1549.2,594.3 1545.4,590.7 L1541.6,587.1" fill="none" stroke="#fff" stroke-width="1" stroke-opacity="0.85" stroke-linecap="round"/>
<path d="M1431.2,511.4 Q1415.2,505.8 1412.5,500.6 L1409.8,495.5" fill="none" stroke="#fff" stroke-width="1" stroke-opacity="0.85" stroke-linecap="round"/>
<path d="M1579.6,469.5 L1595.5,463.0" fill="none" stroke="#fff" stroke-width="1" stroke-opacity="0.85" stroke-linecap="round"/>
<path d="M1611.0,466.3 L1596.4,475.0" fill="none" stroke="#fff" stroke-width="1" stroke-opacity="0.85" stroke-linecap="round"/>
<path d="M1307.6,454.1 Q1323.1,450.8 1327.5,445.6 Q1332.0,440.5 1331.6,436.2 L1331.2,431.9" fill="none" stroke="#fff" stroke-width="1" stroke-opacity="0.85" stroke-linecap="round"/>
<path d="M1549.8,544.0 Q1556.5,550.3 1560.2,551.6 L1564.0,552.9" fill="none" stroke="#fff" stroke-width="1" stroke-opacity="0.85" stroke-linecap="round"/>
<path d="M1593.8,502.9 Q1597.9,508.9 1603.5,510.9 Q1609.0,513.0 1614.0,516.4 Q1619.1,519.7 1620.8,527.2 L1622.5,534.8" fill="none" stroke="#fff" stroke-width="1" stroke-opacity="0.85" stroke-linecap="round"/>
<path d="M1496.0,597.0 Q1510.3,607.4 1514.8,608.1 L1519.3,608.8" fill="none" stroke="#fff" stroke-width="1" stroke-opacity="0.85" stroke-linecap="round"/>
<path d="M1383.4,513.3 Q1376.7,514.2 1373.2,511.0 L1369.7,507.7" fill="none" stroke="#fff" stroke-width="1" stroke-opacity="0.85" stroke-linecap="round"/>
<path d="M1305.6,591.7 Q1295.6,596.9 1289.9,603.5 L1284.3,610.1" fill="none" stroke="#fff" stroke-width="1" stroke-opacity="0.85" stroke-linecap="round"/>
<path d="M1426.0,447.6 Q1421.7,459.7 1418.7,462.4 Q1415.6,465.2 1413.5,472.1 L1411.5,479.1" fill="none" stroke="#fff" stroke-width="1" stroke-opacity="0.85" stroke-linecap="round"/>
<path d="M1327.7,456.4 Q1312.7,455.0 1309.2,453.5 Q1305.6,452.0 1298.9,453.0 Q1292.3,454.0 1289.8,458.1 L1287.3,462.3" fill="none" stroke="#fff" stroke-width="1" stroke-opacity="0.85" stroke-linecap="round"/>
<path d="M1542.3,537.7 L1545.9,526.0" fill="none" stroke="#fff" stroke-width="1" stroke-opacity="0.85" stroke-linecap="round"/>
<path d="M1398.6,560.2 L1404.3,562.6" fill="none" stroke="#fff" stroke-width="1" stroke-opacity="0.85" stroke-linecap="round"/>
<path d="M1466.8,603.9 Q1456.2,611.1 1453.1,611.9 L1450.0,612.6" fill="none" stroke="#fff" stroke-width="1" stroke-opacity="0.85" stroke-linecap="round"/>
<path d="M1501.2,601.3 Q1503.1,618.8 1505.8,623.1 L1508.6,627.5" fill="none" stroke="#fff" stroke-width="1" stroke-opacity="0.85" stroke-linecap="round"/>
<path d="M1572.7,603.2 L1563.4,605.3" fill="none" stroke="#fff" stroke-width="1" stroke-opacity="0.85" stroke-linecap="round"/>
<path d="M1555.8,523.9 Q1559.2,529.2 1563.2,531.0 L1567.1,532.8" fill="none" stroke="#fff" stroke-width="1" stroke-opacity="0.85" stroke-linecap="round"/>
<path d="M1335.9,487.1 L1341.7,484.8" fill="none" stroke="#fff" stroke-width="1" stroke-opacity="0.85" stroke-linecap="round"/>
<path d="M1558.6,489.1 Q1568.3,481.6 1571.9,481.6 Q1575.5,481.7 1580.5,476.4 Q1585.6,471.1 1588.2,468.4 L1590.7,465.6" fill="none" stroke="#fff" stroke-width="1" stroke-opacity="0.85" stroke-linecap="round"/>
<path d="M1475.3,492.6 Q1486.3,505.0 1490.4,506.5 Q1494.5,508.0 1501.2,509.9 Q1508.0,511.9 1510.5,516.6 L1513.0,521.4" fill="none" stroke="#fff" stroke-width="1" stroke-opacity="0.85" stroke-linecap="round"/>
<path d="M1306.5,559.4 L1311.1,549.7" fill="none" stroke="#fff" stroke-width="1" stroke-opacity="0.85" stroke-linecap="round"/>
<path d="M1571.9,503.6 Q1564.2,516.0 1557.9,516.9 Q1551.6,517.8 1546.9,519.3 L1542.2,520.9" fill="none" stroke="#fff" stroke-width="1" stroke-opacity="0.85" stroke-linecap="round"/>
<path d="M1496.4,501.1 Q1502.8,507.4 1508.6,510.9 Q1514.4,514.4 1520.5,512.9 L1526.5,511.4" fill="none" stroke="#fff" stroke-width="1" stroke-opacity="0.85" stroke-linecap="round"/>
<path d="M1451.6,534.9 Q1462.6,534.3 1471.5,533.0 L1480.4,531.8" fill="none" stroke="#fff" stroke-width="1" stroke-opacity="0.85" stroke-linecap="round"/>
<path d="M1316.4,624.3 L1322.8,624.8" fill="none" stroke="#fff" stroke-width="1" stroke-opacity="0.85" stroke-linecap="round"/>
<path d="M1393.0,567.5 L1397.0,580.4" fill="none" stroke="#fff" stroke-width="1" stroke-opacity="0.85" stroke-linecap="round"/>
<path d="M1482.1,521.5 Q1488.2,517.5 1489.0,513.5 Q1489.8,509.6 1496.9,504.6 L1504.1,499.5" fill="none" stroke="#fff" stroke-width="1" stroke-opacity="0.85" stroke-linecap="round"/>
<path d="M1615.5,455.9 Q1606.1,449.6 1604.2,441.6 L1602.2,433.5" fill="none" stroke="#fff" stroke-width="1" stroke-opacity="0.85" stroke-linecap="round"/>
<path d="M1502.1,491.5 Q1503.8,475.6 1506.2,469.6 Q1508.6,463.6 1511.5,460.6 L1514.4,457.5" fill="none" stroke="#fff" stroke-width="1" stroke-opacity="0.85" stroke-linecap="round"/>
<path d="M1461.3,543.0 Q1445.6,545.2 1441.8,548.4 Q1437.9,551.6 1431.7,550.7 Q1425.5,549.7 1422.2,545.5 L1419.0,541.2" fill="none" stroke="#fff" stroke-width="1" stroke-opacity="0.85" stroke-linecap="round"/>
<path d="M1645.6,495.6 Q1649.7,483.6 1652.7,479.5 L1655.6,475.3" fill="none" stroke="#fff" stroke-width="1" stroke-opacity="0.85" stroke-linecap="round"/>
<path d="M1480.9,596.9 L1468.7,597.3" fill="none" stroke="#fff" stroke-width="1" stroke-opacity="0.85" stroke-linecap="round"/>
<path d="M1537.2,615.6 L1533.4,622.3" fill="none" stroke="#fff" stroke-width="1" stroke-opacity="0.85" stroke-linecap="round"/>
<path d="M1593.6,457.9 Q1600.9,452.2 1607.4,450.1 Q1613.9,448.1 1616.8,443.5 Q1619.6,438.8 1622.9,434.5 L1626.2,430.1" fill="none" stroke="#fff" stroke-width="1" stroke-opacity="0.85" stroke-linecap="round"/>
<path d="M1341.1,514.7 Q1350.9,519.7 1357.5,524.8 L1364.0,529.8" fill="none" stroke="#fff" stroke-width="1" stroke-opacity="0.85" stroke-linecap="round"/>
<path d="M1432.8,525.0 Q1424.3,529.3 1419.3,533.2 Q1414.4,537.1 1409.5,537.9 L1404.6,538.6" fill="none" stroke="#fff" stroke-width="1" stroke-opacity="0.85" stroke-linecap="round"/>
<path d="M1597.3,533.9 Q1585.1,531.5 1579.5,531.6 L1573.9,531.8" fill="none" stroke="#fff" stroke-width="1" stroke-opacity="0.85" stroke-linecap="round"/>
<path d="M1381.2,594.5 Q1381.7,612.0 1378.1,616.2 L1374.4,620.4" fill="none" stroke="#fff" stroke-width="1" stroke-opacity="0.85" stroke-linecap="round"/>
<path d="M1303.7,448.9 Q1295.2,444.5 1291.5,441.4 Q1287.7,438.3 1286.1,433.0 Q1284.4,427.6 1281.4,420.9 L1278.4,414.1" fill="none" stroke="#fff" stroke-width="1" stroke-opacity="0.85" stroke-linecap="round"/>
<path d="M1462.5,447.7 Q1460.0,430.5 1455.3,426.5 Q1450.6,422.5 1446.0,419.9 Q1441.5,417.3 1436.5,413.4 L1431.4,409.5" fill="none" stroke="#fff" stroke-width="1" stroke-opacity="0.85" stroke-linecap="round"/>
<path d="M1607.9,621.3 Q1595.7,612.3 1592.1,606.9 Q1588.4,601.5 1581.2,599.6 Q1573.9,597.8 1568.8,597.8 L1563.6,597.8" fill="none" stroke="#fff" stroke-width="1" stroke-opacity="0.85" stroke-linecap="round"/>
<path d="M1326.3,498.4 Q1324.7,512.6 1318.2,518.8 Q1311.8,524.9 1310.8,530.3 L1309.7,535.8" fill="none" stroke="#fff" stroke-width="1" stroke-opacity="0.85" stroke-linecap="round"/>
<path d="M1401.5,536.2 Q1393.5,543.7 1392.8,550.0 L1392.2,556.4" fill="none" stroke="#fff" stroke-width="1" stroke-opacity="0.85" stroke-linecap="round"/>
<path d="M1499.5,558.7 Q1494.1,555.7 1488.1,551.6 Q1482.1,547.5 1474.3,544.0 Q1466.6,540.6 1463.3,542.2 L1460.1,543.8" fill="none" stroke="#fff" stroke-width="1" stroke-opacity="0.85" stroke-linecap="round"/>
<path d="M1310.3,472.9 Q1322.5,461.8 1323.7,455.9 Q1324.8,449.9 1326.3,446.0 L1327.8,442.1" fill="none" stroke="#fff" stroke-width="1" stroke-opacity="0.85" stroke-linecap="round"/>
<path d="M1350.9,537.5 L1344.7,541.1" fill="none" stroke="#fff" stroke-width="1" stroke-opacity="0.85" stroke-linecap="round"/>
<path d="M1482.9,594.8 L1475.9,582.8" fill="none" stroke="#fff" stroke-width="1" stroke-opacity="0.85" stroke-linecap="round"/>
<path d="M1502.6,467.1 Q1506.4,474.1 1505.6,477.6 Q1504.7,481.1 1505.0,487.6 L1505.2,494.1" fill="none" stroke="#fff" stroke-width="1" stroke-opacity="0.85" stroke-linecap="round"/>
<path d="M1457.4,512.5 Q1462.5,524.5 1463.5,530.0 Q1464.6,535.6 1468.3,538.0 Q1472.1,540.4 1475.2,548.4 L1478.3,556.4" fill="none" stroke="#fff" stroke-width="1" stroke-opacity="0.85" stroke-linecap="round"/>
<path d="M1410.2,609.0 Q1409.8,598.0 1415.9,592.4 Q1422.1,586.8 1425.2,585.4 L1428.3,584.0" fill="none" stroke="#fff" stroke-width="1" stroke-opacity="0.85" stroke-linecap="round"/>
<path d="M1536.2,549.9 Q1522.3,558.9 1518.3,565.5 Q1514.4,572.2 1513.2,576.1 Q1512.1,580.0 1508.4,581.8 L1504.7,583.5" fill="none" stroke="#fff" stroke-width="1" stroke-opacity="0.85" stroke-linecap="round"/>
<path d="M1401.7,545.6 Q1407.2,554.0 1413.0,560.6 Q1418.7,567.2 1423.7,574.1 Q1428.6,581.0 1431.9,585.1 L1435.3,589.3" fill="none" stroke="#fff" stroke-width="1" stroke-opacity="0.85" stroke-linecap="round"/>
<path d="M1420.6,521.9 L1424.8,531.0" fill="none" stroke="#fff" stroke-width="1" stroke-opacity="0.85" stroke-linecap="round"/>
<path d="M1547.1,457.4 Q1546.2,470.0 1549.2,477.1 L1552.3,484.3" fill="none" stroke="#fff" stroke-width="1" stroke-opacity="0.85" stroke-linecap="round"/>
<path d="M1428.8,480.7 Q1421.1,486.4 1416.8,486.4 L1412.6,486.4" fill="none" stroke="#fff" stroke-width="1" stroke-opacity="0.85" stroke-linecap="round"/>
<path d="M1536.4,617.1 Q1549.0,613.9 1553.5,613.6 Q1557.9,613.4 1561.4,615.8 Q1564.9,618.3 1567.9,620.5 L1570.9,622.8" fill="none" stroke="#fff" stroke-width="1" stroke-opacity="0.85" stroke-linecap="round"/>
<path d="M1489.9,490.8 Q1493.1,485.4 1491.8,481.8 Q1490.5,478.1 1490.5,470.8 Q1490.6,463.5 1487.1,456.7 L1483.6,449.9" fill="none" stroke="#fff" stroke-width="1" stroke-opacity="0.85" stroke-linecap="round"/>
<path d="M1365.9,607.6 Q1375.7,619.8 1376.9,623.8 L1378.1,627.7" fill="none" stroke="#fff" stroke-width="1" stroke-opacity="0.85" stroke-linecap="round"/>
<path d="M1585.9,515.0 Q1570.9,518.3 1565.7,524.6 Q1560.5,530.9 1561.2,535.5 Q1562.0,540.1 1561.0,547.1 L1560.0,554.1" fill="none" stroke="#fff" stroke-width="1" stroke-opacity="0.85" stroke-linecap="round"/>
<path d="M1377.3,282.6 Q1377.8,272.6 1379.4,267.0 Q1381.1,261.4 1379.3,257.4 Q1377.6,253.3 1377.7,243.0 L1377.8,232.7" fill="none" stroke="#fff" stroke-width="1" stroke-opacity="0.85" stroke-linecap="round"/>
<path d="M1456.8,182.8 Q1466.5,191.3 1468.2,195.2 L1470.0,199.0" fill="none" stroke="#fff" stroke-width="1" stroke-opacity="0.85" stroke-linecap="round"/>
<path d="M1421.5,340.7 Q1436.6,341.0 1441.7,340.6 L1446.7,340.1" fill="none" stroke="#fff" stroke-width="1" stroke-opacity="0.85" stroke-linecap="round"/>
<path d="M1450.6,265.5 Q1466.4,278.4 1470.3,285.0 Q1474.3,291.6 1476.5,302.1 L1478.8,312.7" fill="none" stroke="#fff" stroke-width="1" stroke-opacity="0.85" stroke-linecap="round"/>
<path d="M1308.2,257.4 Q1298.4,242.3 1292.5,236.1 Q1286.5,229.9 1285.0,221.1 L1283.4,212.2" fill="none" stroke="#fff" stroke-width="1" stroke-opacity="0.85" stroke-linecap="round"/>
<path d="M1361.9,196.1 Q1372.5,188.5 1379.2,186.5 Q1385.9,184.5 1395.6,183.9 Q1405.3,183.4 1412.2,185.2 L1419.0,187.0" fill="none" stroke="#fff" stroke-width="1" stroke-opacity="0.85" stroke-linecap="round"/>
<path d="M1345.3,352.4 Q1346.0,338.6 1352.2,330.1 L1358.5,321.5" fill="none" stroke="#fff" stroke-width="1" stroke-opacity="0.85" stroke-linecap="round"/>
<path d="M1423.0,218.8 Q1435.3,226.8 1438.6,227.9 L1441.9,229.0" fill="none" stroke="#fff" stroke-width="1" stroke-opacity="0.85" stroke-linecap="round"/>
<path d="M1390.6,226.0 Q1384.6,241.9 1380.0,247.1 L1375.5,252.2" fill="none" stroke="#fff" stroke-width="1" stroke-opacity="0.85" stroke-linecap="round"/>
<path d="M1301.3,357.3 Q1318.2,360.3 1326.4,363.1 Q1334.6,366.0 1338.8,368.6 L1342.9,371.3" fill="none" stroke="#fff" stroke-width="1" stroke-opacity="0.85" stroke-linecap="round"/>
<path d="M1326.0,285.8 Q1340.1,279.2 1349.1,280.6 L1358.1,282.0" fill="none" stroke="#fff" stroke-width="1" stroke-opacity="0.85" stroke-linecap="round"/>
<path d="M1325.2,249.5 Q1318.6,250.6 1315.0,254.8 L1311.5,258.9" fill="none" stroke="#fff" stroke-width="1" stroke-opacity="0.85" stroke-linecap="round"/>
<path d="M1368.0,430.1 Q1377.7,439.4 1382.1,439.4 Q1386.4,439.4 1388.3,441.8 Q1390.3,444.2 1399.2,445.4 L1408.1,446.5" fill="none" stroke="#fff" stroke-width="1" stroke-opacity="0.85" stroke-linecap="round"/>
<path d="M1457.8,434.7 L1452.2,419.4" fill="none" stroke="#fff" stroke-width="1" stroke-opacity="0.85" stroke-linecap="round"/>
<path d="M1407.4,382.1 Q1393.9,397.8 1385.9,398.4 Q1377.9,399.0 1370.8,403.1 L1363.7,407.2" fill="none" stroke="#fff" stroke-width="1" stroke-opacity="0.85" stroke-linecap="round"/>
<path d="M1354.1,209.2 Q1373.2,205.4 1377.7,205.7 Q1382.1,205.9 1388.8,213.1 Q1395.4,220.3 1396.4,224.5 L1397.4,228.7" fill="none" stroke="#fff" stroke-width="1" stroke-opacity="0.85" stroke-linecap="round"/>
<path d="M1482.7,370.9 Q1479.1,386.9 1481.1,391.3 L1483.1,395.7" fill="none" stroke="#fff" stroke-width="1" stroke-opacity="0.85" stroke-linecap="round"/>
<path d="M1502.3,396.5 L1501.4,403.1" fill="none" stroke="#fff" stroke-width="1" stroke-opacity="0.85" stroke-linecap="round"/>
<path d="M1438.2,391.7 L1432.2,371.4" fill="none" stroke="#fff" stroke-width="1" stroke-opacity="0.85" stroke-linecap="round"/>
<path d="M1409.9,214.2 L1411.4,222.3" fill="none" stroke="#fff" stroke-width="1" stroke-opacity="0.85" stroke-linecap="round"/>
<path d="M1330.4,342.7 L1314.9,354.6" fill="none" stroke="#fff" stroke-width="1" stroke-opacity="0.85" stroke-linecap="round"/>
<path d="M1348.0,271.8 Q1355.0,267.4 1358.4,266.8 Q1361.8,266.1 1367.4,257.7 Q1373.1,249.3 1376.2,248.8 L1379.2,248.3" fill="none" stroke="#fff" stroke-width="1" stroke-opacity="0.85" stroke-linecap="round"/>
<path d="M1338.8,366.2 L1328.3,374.1" fill="none" stroke="#fff" stroke-width="1" stroke-opacity="0.85" stroke-linecap="round"/>
<path d="M1376.6,224.4 Q1389.7,230.0 1395.6,234.3 Q1401.4,238.6 1405.2,240.4 L1409.1,242.3" fill="none" stroke="#fff" stroke-width="1" stroke-opacity="0.85" stroke-linecap="round"/>
<path d="M1434.0,193.8 L1434.2,178.1" fill="none" stroke="#fff" stroke-width="1" stroke-opacity="0.85" stroke-linecap="round"/>
<path d="M1405.8,345.5 Q1398.2,357.8 1397.7,367.6 Q1397.2,377.4 1393.8,385.6 L1390.3,393.8" fill="none" stroke="#fff" stroke-width="1" stroke-opacity="0.85" stroke-linecap="round"/>
<path d="M1332.3,327.2 Q1320.7,328.6 1315.1,332.1 Q1309.5,335.5 1304.9,334.1 Q1300.3,332.7 1296.9,329.6 L1293.5,326.5" fill="none" stroke="#fff" stroke-width="1" stroke-opacity="0.85" stroke-linecap="round"/>
<path d="M1348.7,396.4 Q1335.9,389.5 1330.2,385.6 L1324.4,381.8" fill="none" stroke="#fff" stroke-width="1" stroke-opacity="0.85" stroke-linecap="round"/>
<path d="M1349.8,325.5 L1359.9,342.3" fill="none" stroke="#fff" stroke-width="1" stroke-opacity="0.85" stroke-linecap="round"/>
<path d="M1476.1,208.0 L1465.5,196.0" fill="none" stroke="#fff" stroke-width="1" stroke-opacity="0.85" stroke-linecap="round"/>
<path d="M1413.3,295.3 Q1395.8,282.9 1389.0,283.7 L1382.3,284.5" fill="none" stroke="#fff" stroke-width="1" stroke-opacity="0.85" stroke-linecap="round"/>
<path d="M1382.1,337.8 L1381.0,349.7" fill="none" stroke="#fff" stroke-width="1" stroke-opacity="0.85" stroke-linecap="round"/>
<path d="M1430.7,229.1 Q1419.9,235.9 1412.0,235.0 L1404.0,234.1" fill="none" stroke="#fff" stroke-width="1" stroke-opacity="0.85" stroke-linecap="round"/>
<path d="M1423.9,417.9 Q1435.5,415.6 1444.7,417.7 L1453.9,419.8" fill="none" stroke="#fff" stroke-width="1" stroke-opacity="0.85" stroke-linecap="round"/>
<path d="M1302.6,240.5 Q1316.2,251.6 1324.0,251.3 Q1331.8,251.0 1338.3,254.6 L1344.8,258.1" fill="none" stroke="#fff" stroke-width="1" stroke-opacity="0.85" stroke-linecap="round"/>
<path d="M1324.9,420.0 Q1323.4,408.4 1325.6,406.1 Q1327.8,403.8 1334.0,402.0 L1340.3,400.1" fill="none" stroke="#fff" stroke-width="1" stroke-opacity="0.85" stroke-linecap="round"/>
<path d="M1407.4,191.8 Q1412.1,205.9 1416.4,213.2 L1420.8,220.4" fill="none" stroke="#fff" stroke-width="1" stroke-opacity="0.85" stroke-linecap="round"/>
<path d="M1331.7,406.6 Q1314.7,419.1 1313.0,424.6 Q1311.2,430.1 1305.3,434.0 L1299.5,437.9" fill="none" stroke="#fff" stroke-width="1" stroke-opacity="0.85" stroke-linecap="round"/>
<path d="M1476.1,181.5 Q1468.2,199.3 1465.5,207.4 Q1462.8,215.5 1458.4,217.5 Q1454.0,219.5 1448.4,223.9 L1442.8,228.4" fill="none" stroke="#fff" stroke-width="1" stroke-opacity="0.85" stroke-linecap="round"/>
<path d="M1416.2,255.4 L1417.8,264.7" fill="none" stroke="#fff" stroke-width="1" stroke-opacity="0.85" stroke-linecap="round"/>
<path d="M1460.0,260.8 Q1450.3,266.0 1446.5,271.8 Q1442.7,277.5 1438.0,279.0 L1433.2,280.5" fill="none" stroke="#fff" stroke-width="1" stroke-opacity="0.85" stroke-linecap="round"/>
<path d="M1433.9,341.1 Q1428.5,332.3 1422.7,328.4 L1416.8,324.5" fill="none" stroke="#fff" stroke-width="1" stroke-opacity="0.85" stroke-linecap="round"/>
<path d="M1425.2,313.5 L1443.7,322.6" fill="none" stroke="#fff" stroke-width="1" stroke-opacity="0.85" stroke-linecap="round"/>
<path d="M1321.0,225.4 L1313.2,234.3" fill="none" stroke="#fff" stroke-width="1" stroke-opacity="0.85" stroke-linecap="round"/>
<path d="M1475.0,405.9 L1485.8,406.9" fill="none" stroke="#fff" stroke-width="1" stroke-opacity="0.85" stroke-linecap="round"/>
<path d="M1462.7,308.4 Q1456.2,289.5 1456.4,283.9 Q1456.6,278.2 1462.2,271.9 L1467.7,265.6" fill="none" stroke="#fff" stroke-width="1" stroke-opacity="0.85" stroke-linecap="round"/>
<path d="M1472.2,307.0 Q1478.2,285.9 1482.1,283.3 L1485.9,280.7" fill="none" stroke="#fff" stroke-width="1" stroke-opacity="0.85" stroke-linecap="round"/>
<path d="M1447.7,280.5 Q1429.4,290.5 1425.2,290.9 Q1421.1,291.3 1416.1,291.1 L1411.1,291.0" fill="none" stroke="#fff" stroke-width="1" stroke-opacity="0.85" stroke-linecap="round"/>
<path d="M1444.9,430.8 Q1459.6,426.4 1464.0,425.8 L1468.4,425.1" fill="none" stroke="#fff" stroke-width="1" stroke-opacity="0.85" stroke-linecap="round"/>
<path d="M1517.2,267.7 Q1531.1,256.9 1536.5,248.8 Q1541.9,240.8 1546.2,239.7 Q1550.4,238.5 1557.6,239.9 L1564.8,241.4" fill="none" stroke="#fff" stroke-width="1" stroke-opacity="0.85" stroke-linecap="round"/>
<path d="M1437.8,235.5 L1449.2,230.5" fill="none" stroke="#fff" stroke-width="1" stroke-opacity="0.85" stroke-linecap="round"/>
<path d="M1432.6,403.6 Q1422.9,402.3 1419.8,404.8 L1416.6,407.3" fill="none" stroke="#fff" stroke-width="1" stroke-opacity="0.85" stroke-linecap="round"/>
<path d="M1316.2,390.8 Q1310.1,390.4 1304.5,396.3 L1298.9,402.2" fill="none" stroke="#fff" stroke-width="1" stroke-opacity="0.85" stroke-linecap="round"/>
<path d="M1371.0,179.4 L1366.5,195.1" fill="none" stroke="#fff" stroke-width="1" stroke-opacity="0.85" stroke-linecap="round"/>
<path d="M1449.4,262.5 Q1466.8,255.5 1474.7,256.4 Q1482.5,257.3 1493.3,256.6 Q1504.2,255.9 1512.8,261.9 L1521.5,267.9" fill="none" stroke="#fff" stroke-width="1" stroke-opacity="0.85" stroke-linecap="round"/>
<path d="M1305.7,256.9 Q1303.0,250.6 1297.3,243.9 Q1291.6,237.2 1287.9,236.2 L1284.3,235.3" fill="none" stroke="#fff" stroke-width="1" stroke-opacity="0.85" stroke-linecap="round"/>
<path d="M1331.4,377.6 Q1341.7,385.2 1347.4,390.4 Q1353.1,395.5 1358.2,402.1 L1363.2,408.6" fill="none" stroke="#fff" stroke-width="1" stroke-opacity="0.85" stroke-linecap="round"/>
<path d="M1372.8,370.6 Q1363.3,386.2 1358.6,388.9 Q1353.9,391.7 1345.1,398.0 Q1336.3,404.3 1331.9,407.1 L1327.5,410.0" fill="none" stroke="#fff" stroke-width="1" stroke-opacity="0.85" stroke-linecap="round"/>
<path d="M1507.0,207.3 Q1513.2,211.7 1524.0,211.6 Q1534.8,211.4 1542.7,209.9 Q1550.6,208.3 1559.6,214.4 L1568.6,220.4" fill="none" stroke="#fff" stroke-width="1" stroke-opacity="0.85" stroke-linecap="round"/>
<path d="M1437.4,204.8 Q1423.2,209.2 1414.2,214.6 L1405.2,220.0" fill="none" stroke="#fff" stroke-width="1" stroke-opacity="0.85" stroke-linecap="round"/>
<path d="M1332.8,219.6 Q1328.0,205.9 1324.2,198.1 L1320.4,190.3" fill="none" stroke="#fff" stroke-width="1" stroke-opacity="0.85" stroke-linecap="round"/>
<path d="M1489.2,229.1 Q1497.8,218.9 1497.8,208.7 Q1497.7,198.5 1491.5,192.2 Q1485.2,185.9 1478.5,181.2 L1471.8,176.6" fill="none" stroke="#fff" stroke-width="1" stroke-opacity="0.85" stroke-linecap="round"/>
<path d="M1490.1,188.1 Q1469.9,184.4 1464.3,178.4 Q1458.7,172.3 1455.5,172.4 Q1452.3,172.5 1444.7,176.7 L1437.0,180.8" fill="none" stroke="#fff" stroke-width="1" stroke-opacity="0.85" stroke-linecap="round"/>
<path d="M1377.9,259.4 Q1368.1,255.0 1364.0,252.5 Q1360.0,250.0 1358.5,246.1 L1357.0,242.1" fill="none" stroke="#fff" stroke-width="1" stroke-opacity="0.85" stroke-linecap="round"/>
<path d="M1491.2,243.6 Q1488.2,233.6 1491.0,227.2 Q1493.7,220.9 1496.6,217.8 L1499.5,214.6" fill="none" stroke="#fff" stroke-width="1" stroke-opacity="0.85" stroke-linecap="round"/>
<path d="M1431.5,293.4 Q1419.6,277.8 1419.1,274.5 L1418.6,271.1" fill="none" stroke="#fff" stroke-width="1" stroke-opacity="0.85" stroke-linecap="round"/>
<path d="M1396.6,288.5 Q1399.0,305.3 1396.7,308.8 Q1394.3,312.3 1393.3,316.2 L1392.3,320.2" fill="none" stroke="#fff" stroke-width="1" stroke-opacity="0.85" stroke-linecap="round"/>
<path d="M1410.6,266.2 Q1399.3,253.6 1399.4,247.9 Q1399.6,242.2 1405.3,235.6 Q1411.0,229.0 1409.6,218.2 L1408.2,207.5" fill="none" stroke="#fff" stroke-width="1" stroke-opacity="0.85" stroke-linecap="round"/>
<path d="M1351.6,384.3 L1349.9,376.3" fill="none" stroke="#fff" stroke-width="1" stroke-opacity="0.85" stroke-linecap="round"/>
<path d="M1426.5,359.2 L1416.7,339.6" fill="none" stroke="#fff" stroke-width="1" stroke-opacity="0.85" stroke-linecap="round"/>
<path d="M1869.7,204.3 Q1861.1,217.0 1857.6,221.3 L1854.1,225.7" fill="none" stroke="#fff" stroke-width="1" stroke-opacity="0.85" stroke-linecap="round"/>
<path d="M1772.0,318.2 Q1786.0,332.1 1785.8,336.6 Q1785.5,341.2 1777.7,347.4 L1769.8,353.5" fill="none" stroke="#fff" stroke-width="1" stroke-opacity="0.85" stroke-linecap="round"/>
<path d="M1609.1,191.4 L1598.9,185.8" fill="none" stroke="#fff" stroke-width="1" stroke-opacity="0.85" stroke-linecap="round"/>
<path d="M1537.2,308.3 Q1529.8,317.5 1527.4,321.1 Q1525.0,324.6 1523.3,330.3 L1521.6,336.0" fill="none" stroke="#fff" stroke-width="1" stroke-opacity="0.85" stroke-linecap="round"/>
<path d="M1683.3,438.2 Q1678.6,425.5 1681.9,419.4 Q1685.2,413.3 1687.1,406.9 L1689.0,400.4" fill="none" stroke="#fff" stroke-width="1" stroke-opacity="0.85" stroke-linecap="round"/>
<path d="M1683.2,210.3 L1694.5,210.2" fill="none" stroke="#fff" stroke-width="1" stroke-opacity="0.85" stroke-linecap="round"/>
<path d="M1913.5,357.9 L1916.8,338.6" fill="none" stroke="#fff" stroke-width="1" stroke-opacity="0.85" stroke-linecap="round"/>
<path d="M1533.4,364.0 Q1519.9,375.3 1513.7,381.4 Q1507.5,387.4 1502.0,393.3 L1496.6,399.2" fill="none" stroke="#fff" stroke-width="1" stroke-opacity="0.85" stroke-linecap="round"/>
<path d="M1777.6,298.1 Q1769.4,305.9 1764.2,313.5 Q1759.1,321.1 1755.6,329.4 Q1752.1,337.6 1747.7,344.0 L1743.3,350.3" fill="none" stroke="#fff" stroke-width="1" stroke-opacity="0.85" stroke-linecap="round"/>
<path d="M1789.5,258.3 Q1783.7,238.2 1785.6,232.7 L1787.5,227.2" fill="none" stroke="#fff" stroke-width="1" stroke-opacity="0.85" stroke-linecap="round"/>
<path d="M1861.4,265.2 Q1839.9,270.0 1831.6,274.1 L1823.3,278.3" fill="none" stroke="#fff" stroke-width="1" stroke-opacity="0.85" stroke-linecap="round"/>
<path d="M1601.5,217.3 Q1592.9,222.6 1587.8,221.3 L1582.7,220.0" fill="none" stroke="#fff" stroke-width="1" stroke-opacity="0.85" stroke-linecap="round"/>
<path d="M1860.6,346.8 Q1873.9,347.2 1881.7,341.4 Q1889.5,335.6 1891.8,331.1 L1894.2,326.6" fill="none" stroke="#fff" stroke-width="1" stroke-opacity="0.85" stroke-linecap="round"/>
<path d="M1560.9,267.6 Q1555.2,254.4 1558.4,248.4 Q1561.6,242.5 1565.0,234.3 L1568.4,226.1" fill="none" stroke="#fff" stroke-width="1" stroke-opacity="0.85" stroke-linecap="round"/>
<path d="M1710.4,385.9 Q1705.8,379.3 1703.4,372.2 L1701.1,365.2" fill="none" stroke="#fff" stroke-width="1" stroke-opacity="0.85" stroke-linecap="round"/>
<path d="M1767.9,312.3 Q1766.1,304.2 1759.3,299.9 Q1752.6,295.7 1749.5,291.4 L1746.5,287.2" fill="none" stroke="#fff" stroke-width="1" stroke-opacity="0.85" stroke-linecap="round"/>
<path d="M1629.3,258.8 Q1627.5,267.9 1630.8,277.4 Q1634.2,286.8 1633.0,293.6 Q1631.7,300.5 1632.1,308.8 L1632.5,317.1" fill="none" stroke="#fff" stroke-width="1" stroke-opacity="0.85" stroke-linecap="round"/>
<path d="M1537.5,290.6 Q1525.1,308.3 1523.7,316.4 Q1522.2,324.5 1518.2,328.4 L1514.1,332.4" fill="none" stroke="#fff" stroke-width="1" stroke-opacity="0.85" stroke-linecap="round"/>
<path d="M1571.5,337.8 Q1578.5,332.2 1579.9,322.3 Q1581.3,312.4 1580.9,305.3 L1580.5,298.2" fill="none" stroke="#fff" stroke-width="1" stroke-opacity="0.85" stroke-linecap="round"/>
<path d="M1685.1,422.8 L1680.0,414.7" fill="none" stroke="#fff" stroke-width="1" stroke-opacity="0.85" stroke-linecap="round"/>
<path d="M1892.2,359.9 Q1888.2,369.5 1890.0,376.1 Q1891.8,382.6 1900.3,386.4 L1908.8,390.1" fill="none" stroke="#fff" stroke-width="1" stroke-opacity="0.85" stroke-linecap="round"/>
<path d="M1735.6,420.1 Q1722.6,433.7 1721.3,438.4 Q1720.1,443.0 1716.8,446.1 L1713.4,449.1" fill="none" stroke="#fff" stroke-width="1" stroke-opacity="0.85" stroke-linecap="round"/>
<path d="M1560.5,195.7 L1563.5,187.4" fill="none" stroke="#fff" stroke-width="1" stroke-opacity="0.85" stroke-linecap="round"/>
<path d="M1541.8,357.2 Q1519.9,356.0 1511.5,361.6 L1503.0,367.1" fill="none" stroke="#fff" stroke-width="1" stroke-opacity="0.85" stroke-linecap="round"/>
<path d="M1653.1,310.9 Q1664.7,301.0 1670.8,298.3 Q1676.9,295.6 1682.0,292.1 L1687.0,288.7" fill="none" stroke="#fff" stroke-width="1" stroke-opacity="0.85" stroke-linecap="round"/>
<path d="M1872.5,354.5 Q1856.8,367.0 1852.3,375.9 L1847.8,384.9" fill="none" stroke="#fff" stroke-width="1" stroke-opacity="0.85" stroke-linecap="round"/>
<path d="M1600.4,186.0 Q1582.1,175.6 1573.2,176.8 Q1564.3,178.0 1554.7,182.2 L1545.1,186.5" fill="none" stroke="#fff" stroke-width="1" stroke-opacity="0.85" stroke-linecap="round"/>
<path d="M1701.7,361.5 Q1693.8,359.4 1686.7,351.5 Q1679.5,343.6 1675.5,342.2 L1671.4,340.9" fill="none" stroke="#fff" stroke-width="1" stroke-opacity="0.85" stroke-linecap="round"/>
<path d="M1694.8,225.7 Q1692.7,239.3 1694.7,244.3 Q1696.7,249.3 1695.3,254.4 Q1693.9,259.5 1695.8,264.0 L1697.6,268.5" fill="none" stroke="#fff" stroke-width="1" stroke-opacity="0.85" stroke-linecap="round"/>
<path d="M1870.2,390.2 L1849.4,388.3" fill="none" stroke="#fff" stroke-width="1" stroke-opacity="0.85" stroke-linecap="round"/>
<path d="M1864.6,533.7 Q1856.8,516.1 1857.2,511.0 Q1857.7,505.9 1858.7,496.9 L1859.7,488.0" fill="none" stroke="#fff" stroke-width="1" stroke-opacity="0.85" stroke-linecap="round"/>
<path d="M1774.8,477.9 L1783.8,488.4" fill="none" stroke="#fff" stroke-width="1" stroke-opacity="0.85" stroke-linecap="round"/>
<path d="M1719.0,610.3 Q1726.1,591.4 1724.9,586.6 L1723.7,581.9" fill="none" stroke="#fff" stroke-width="1" stroke-opacity="0.85" stroke-linecap="round"/>
<path d="M1769.6,582.5 Q1786.1,575.7 1790.3,571.2 Q1794.5,566.6 1796.3,559.0 L1798.1,551.3" fill="none" stroke="#fff" stroke-width="1" stroke-opacity="0.85" stroke-linecap="round"/>
<path d="M1903.4,565.1 L1911.9,574.4" fill="none" stroke="#fff" stroke-width="1" stroke-opacity="0.85" stroke-linecap="round"/>
<path d="M1728.0,563.1 Q1728.9,548.6 1731.5,542.1 L1734.1,535.6" fill="none" stroke="#fff" stroke-width="1" stroke-opacity="0.85" stroke-linecap="round"/>
<path d="M1680.7,595.8 L1680.9,617.7" fill="none" stroke="#fff" stroke-width="1" stroke-opacity="0.85" stroke-linecap="round"/>
<path d="M1743.3,581.1 L1733.4,585.5" fill="none" stroke="#fff" stroke-width="1" stroke-opacity="0.85" stroke-linecap="round"/>
<path d="M1731.2,549.8 Q1727.6,540.5 1730.1,530.5 L1732.6,520.6" fill="none" stroke="#fff" stroke-width="1" stroke-opacity="0.85" stroke-linecap="round"/>
<path d="M1710.9,613.8 L1732.4,612.2" fill="none" stroke="#fff" stroke-width="1" stroke-opacity="0.85" stroke-linecap="round"/>
<path d="M1903.1,563.4 L1915.5,567.0" fill="none" stroke="#fff" stroke-width="1" stroke-opacity="0.85" stroke-linecap="round"/>
<path d="M1679.4,596.4 Q1683.6,588.1 1689.2,580.5 Q1694.9,572.8 1693.4,565.7 Q1691.9,558.6 1685.8,554.0 L1679.8,549.5" fill="none" stroke="#fff" stroke-width="1" stroke-opacity="0.85" stroke-linecap="round"/>
<path d="M1823.3,464.8 Q1817.7,457.7 1810.4,452.2 Q1803.1,446.7 1794.5,447.5 L1785.9,448.3" fill="none" stroke="#fff" stroke-width="1" stroke-opacity="0.85" stroke-linecap="round"/>
<path d="M1651.3,561.2 Q1649.5,551.3 1641.7,544.8 Q1633.9,538.3 1628.5,533.1 L1623.1,528.0" fill="none" stroke="#fff" stroke-width="1" stroke-opacity="0.85" stroke-linecap="round"/>
<path d="M1681.5,527.9 L1692.1,538.7" fill="none" stroke="#fff" stroke-width="1" stroke-opacity="0.85" stroke-linecap="round"/>
<path d="M1703.0,515.9 Q1700.6,536.5 1703.3,543.8 L1706.0,551.0" fill="none" stroke="#fff" stroke-width="1" stroke-opacity="0.85" stroke-linecap="round"/>
<path d="M1675.5,459.9 Q1692.9,457.2 1699.5,450.8 L1706.1,444.3" fill="none" stroke="#fff" stroke-width="1" stroke-opacity="0.85" stroke-linecap="round"/>
<path d="M1720.8,445.8 L1708.7,445.4" fill="none" stroke="#fff" stroke-width="1" stroke-opacity="0.85" stroke-linecap="round"/>
<path d="M1672.6,548.8 L1687.5,561.3" fill="none" stroke="#fff" stroke-width="1" stroke-opacity="0.85" stroke-linecap="round"/>
<path d="M1740.4,458.4 Q1749.8,475.4 1755.0,483.5 L1760.3,491.7" fill="none" stroke="#fff" stroke-width="1" stroke-opacity="0.85" stroke-linecap="round"/>
<path d="M1896.8,442.0 Q1903.4,424.2 1900.8,415.0 Q1898.1,405.9 1892.2,401.0 Q1886.4,396.2 1882.8,387.4 L1879.1,378.5" fill="none" stroke="#fff" stroke-width="1" stroke-opacity="0.85" stroke-linecap="round"/>
<path d="M1704.6,613.9 L1707.3,592.1" fill="none" stroke="#fff" stroke-width="1" stroke-opacity="0.85" stroke-linecap="round"/>
<path d="M1778.6,533.5 L1786.3,516.7" fill="none" stroke="#fff" stroke-width="1" stroke-opacity="0.85" stroke-linecap="round"/>
<path d="M1703.3,557.5 Q1711.1,552.5 1713.5,546.5 Q1716.0,540.5 1722.9,532.2 Q1729.8,524.0 1730.2,514.8 L1730.5,505.6" fill="none" stroke="#fff" stroke-width="1" stroke-opacity="0.85" stroke-linecap="round"/>
<path d="M1872.0,616.2 Q1891.6,615.1 1899.7,613.7 L1907.7,612.3" fill="none" stroke="#fff" stroke-width="1" stroke-opacity="0.85" stroke-linecap="round"/>
<path d="M1883.4,496.2 L1892.0,498.5" fill="none" stroke="#fff" stroke-width="1" stroke-opacity="0.85" stroke-linecap="round"/>
<path d="M1865.0,581.1 Q1870.5,571.9 1873.3,567.0 L1876.2,562.1" fill="none" stroke="#fff" stroke-width="1" stroke-opacity="0.85" stroke-linecap="round"/>
<path d="M1893.4,568.8 Q1886.0,553.2 1886.5,544.8 Q1887.0,536.4 1886.0,530.1 Q1884.9,523.8 1878.5,515.3 L1872.0,506.9" fill="none" stroke="#fff" stroke-width="1" stroke-opacity="0.85" stroke-linecap="round"/>
<path d="M1830.1,588.9 Q1811.1,586.3 1805.7,591.3 Q1800.2,596.3 1795.5,597.1 Q1790.7,597.9 1783.8,597.8 L1776.9,597.7" fill="none" stroke="#fff" stroke-width="1" stroke-opacity="0.85" stroke-linecap="round"/>
<path d="M1772.6,503.1 Q1776.5,516.0 1778.8,519.5 Q1781.1,523.1 1791.1,527.5 L1801.1,532.0" fill="none" stroke="#fff" stroke-width="1" stroke-opacity="0.85" stroke-linecap="round"/>
<path d="M1315.6,203.8 Q1310.5,200.5 1309.4,198.1 L1308.3,195.6" fill="none" stroke="#fff" stroke-width="1" stroke-opacity="0.85" stroke-linecap="round"/>
<path d="M1223.9,193.2 Q1229.5,189.9 1235.6,190.9 Q1241.7,191.8 1248.4,190.5 L1255.1,189.2" fill="none" stroke="#fff" stroke-width="1" stroke-opacity="0.85" stroke-linecap="round"/>
<path d="M1241.4,240.3 Q1252.7,234.6 1253.6,230.4 L1254.5,226.2" fill="none" stroke="#fff" stroke-width="1" stroke-opacity="0.85" stroke-linecap="round"/>
<path d="M1311.0,180.1 Q1307.6,191.2 1303.0,196.4 Q1298.5,201.7 1293.5,204.8 L1288.6,207.9" fill="none" stroke="#fff" stroke-width="1" stroke-opacity="0.85" stroke-linecap="round"/>
<path d="M1217.6,230.8 Q1216.2,236.3 1212.2,238.4 Q1208.3,240.6 1204.2,241.4 Q1200.2,242.3 1195.3,244.6 L1190.5,246.9" fill="none" stroke="#fff" stroke-width="1" stroke-opacity="0.85" stroke-linecap="round"/>
<path d="M1267.9,224.8 Q1277.1,222.5 1279.4,223.6 Q1281.7,224.7 1288.0,223.1 Q1294.3,221.5 1297.8,219.2 L1301.3,216.9" fill="none" stroke="#fff" stroke-width="1" stroke-opacity="0.85" stroke-linecap="round"/>
<path d="M1266.6,183.9 Q1261.6,182.0 1260.4,179.2 L1259.2,176.3" fill="none" stroke="#fff" stroke-width="1" stroke-opacity="0.85" stroke-linecap="round"/>
<path d="M1276.4,217.0 Q1282.3,219.9 1287.7,224.2 Q1293.0,228.6 1294.4,231.9 Q1295.8,235.2 1296.6,237.7 L1297.4,240.2" fill="none" stroke="#fff" stroke-width="1" stroke-opacity="0.85" stroke-linecap="round"/>
<path d="M1253.0,178.6 Q1261.1,183.4 1262.3,187.4 Q1263.6,191.3 1262.4,195.1 Q1261.3,198.9 1263.6,203.0 L1265.9,207.1" fill="none" stroke="#fff" stroke-width="1" stroke-opacity="0.85" stroke-linecap="round"/>
<path d="M1269.2,241.7 L1268.4,248.1" fill="none" stroke="#fff" stroke-width="1" stroke-opacity="0.85" stroke-linecap="round"/>
<path d="M1222.2,196.3 Q1231.4,206.5 1233.0,210.3 Q1234.5,214.2 1233.3,217.7 L1232.2,221.2" fill="none" stroke="#fff" stroke-width="1" stroke-opacity="0.85" stroke-linecap="round"/>
<path d="M1261.7,220.4 Q1265.5,215.8 1267.5,212.0 Q1269.5,208.2 1269.9,201.4 Q1270.3,194.6 1272.8,192.2 L1275.2,189.8" fill="none" stroke="#fff" stroke-width="1" stroke-opacity="0.85" stroke-linecap="round"/>
<path d="M1258.5,237.3 Q1253.7,234.9 1250.1,231.6 Q1246.5,228.2 1241.3,224.6 L1236.1,221.1" fill="none" stroke="#fff" stroke-width="1" stroke-opacity="0.85" stroke-linecap="round"/>
<path d="M1281.9,192.3 L1286.5,183.6" fill="none" stroke="#fff" stroke-width="1" stroke-opacity="0.85" stroke-linecap="round"/>
<path d="M1239.7,219.0 Q1227.0,221.6 1224.1,221.6 L1221.2,221.7" fill="none" stroke="#fff" stroke-width="1" stroke-opacity="0.85" stroke-linecap="round"/>
<path d="M1307.7,237.1 Q1302.9,232.7 1300.8,227.3 Q1298.6,222.0 1297.0,219.4 L1295.4,216.9" fill="none" stroke="#fff" stroke-width="1" stroke-opacity="0.85" stroke-linecap="round"/>
<path d="M1309.4,233.6 Q1317.1,229.8 1319.2,226.3 Q1321.3,222.8 1324.9,217.6 Q1328.6,212.3 1332.4,209.3 L1336.2,206.3" fill="none" stroke="#fff" stroke-width="1" stroke-opacity="0.85" stroke-linecap="round"/>
<path d="M1317.2,182.4 L1320.1,195.4" fill="none" stroke="#fff" stroke-width="1" stroke-opacity="0.85" stroke-linecap="round"/>
<path d="M1200.4,216.8 Q1200.0,225.4 1197.8,228.4 Q1195.5,231.3 1189.7,233.1 L1183.9,234.8" fill="none" stroke="#fff" stroke-width="1" stroke-opacity="0.85" stroke-linecap="round"/>
<path d="M1298.0,211.0 L1309.7,210.3" fill="none" stroke="#fff" stroke-width="1" stroke-opacity="0.85" stroke-linecap="round"/>
<path d="M1284.3,240.5 Q1293.9,244.8 1296.2,246.4 Q1298.6,248.0 1304.7,249.2 Q1310.7,250.5 1314.0,249.4 L1317.3,248.4" fill="none" stroke="#fff" stroke-width="1" stroke-opacity="0.85" stroke-linecap="round"/>
<path d="M1212.2,224.7 L1220.3,226.4" fill="none" stroke="#fff" stroke-width="1" stroke-opacity="0.85" stroke-linecap="round"/>
<path d="M1209.4,237.4 L1202.0,242.7" fill="none" stroke="#fff" stroke-width="1" stroke-opacity="0.85" stroke-linecap="round"/>
<path d="M1258.1,211.3 L1262.9,213.6" fill="none" stroke="#fff" stroke-width="1" stroke-opacity="0.85" stroke-linecap="round"/>
<path d="M1229.9,215.4 Q1240.5,208.6 1241.2,203.8 Q1242.0,198.9 1238.2,194.3 L1234.3,189.7" fill="none" stroke="#fff" stroke-width="1" stroke-opacity="0.85" stroke-linecap="round"/>
<path d="M1265.6,205.1 Q1275.4,211.1 1279.1,213.4 Q1282.7,215.7 1287.8,216.1 L1292.9,216.5" fill="none" stroke="#fff" stroke-width="1" stroke-opacity="0.85" stroke-linecap="round"/>
<path d="M1312.8,249.7 Q1311.6,238.8 1311.8,233.4 Q1312.0,228.0 1315.4,225.2 L1318.8,222.3" fill="none" stroke="#fff" stroke-width="1" stroke-opacity="0.85" stroke-linecap="round"/>
<path d="M1314.5,220.2 Q1319.4,223.6 1325.2,222.6 L1331.1,221.6" fill="none" stroke="#fff" stroke-width="1" stroke-opacity="0.85" stroke-linecap="round"/>
<path d="M1298.2,237.4 L1289.8,247.6" fill="none" stroke="#fff" stroke-width="1" stroke-opacity="0.85" stroke-linecap="round"/>
<path d="M1293.5,176.9 L1293.8,189.4" fill="none" stroke="#fff" stroke-width="1" stroke-opacity="0.85" stroke-linecap="round"/>
<path d="M1297.2,213.9 Q1287.1,213.6 1283.9,216.2 L1280.7,218.8" fill="none" stroke="#fff" stroke-width="1" stroke-opacity="0.85" stroke-linecap="round"/>
<path d="M1296.1,225.9 L1285.9,232.6" fill="none" stroke="#fff" stroke-width="1" stroke-opacity="0.85" stroke-linecap="round"/>
<path d="M1213.3,180.3 Q1222.4,182.3 1226.4,181.9 Q1230.4,181.4 1235.2,185.9 Q1240.0,190.3 1244.5,194.9 L1248.9,199.4" fill="none" stroke="#fff" stroke-width="1" stroke-opacity="0.85" stroke-linecap="round"/>
<path d="M1232.7,202.3 L1231.3,215.7" fill="none" stroke="#fff" stroke-width="1" stroke-opacity="0.85" stroke-linecap="round"/>
<path d="M1236.2,235.6 Q1231.8,230.8 1227.4,230.0 Q1223.1,229.2 1220.6,227.5 Q1218.1,225.8 1213.3,227.1 L1208.6,228.3" fill="none" stroke="#fff" stroke-width="1" stroke-opacity="0.85" stroke-linecap="round"/>
<path d="M1305.7,247.9 L1311.1,252.2" fill="none" stroke="#fff" stroke-width="1" stroke-opacity="0.85" stroke-linecap="round"/>
<path d="M1318.8,239.0 Q1312.0,245.4 1310.8,248.7 Q1309.7,251.9 1308.8,258.4 Q1308.0,264.9 1307.1,267.8 L1306.2,270.6" fill="none" stroke="#fff" stroke-width="1" stroke-opacity="0.85" stroke-linecap="round"/>
<path d="M1124.0,279.0 Q1121.0,304.0 1120.0,313.0 Q1119.0,322.0 1119.3,337.5 Q1119.6,353.0 1118.8,376.0 Q1118.0,399.0 1123.0,410.5 Q1128.0,422.0 1137.0,435.5 Q1146.0,449.0 1150.0,459.5 Q1154.0,470.0 1159.5,485.0 Q1165.0,500.0 1172.5,510.0 L1180.0,520.0" fill="none" stroke="#fff" stroke-width="1.4" stroke-linecap="round"/>
<path d="M1169.0,320.0 Q1182.0,353.0 1188.8,371.0 Q1195.6,389.0 1197.3,394.0 Q1199.0,399.0 1205.5,405.8 Q1212.0,412.5 1217.8,419.8 Q1223.7,427.0 1228.7,439.5 L1233.6,452.0" fill="none" stroke="#fff" stroke-width="1.4" stroke-linecap="round"/>
<path d="M1142.8,339.8 Q1162.6,333.0 1170.8,330.5 Q1179.0,328.0 1187.3,324.0 L1195.6,320.0" fill="none" stroke="#fff" stroke-width="1.4" stroke-linecap="round"/>
<path d="M1141.0,349.7 Q1179.0,348.0 1191.5,342.2 Q1203.9,336.5 1224.5,332.2 L1245.0,328.0" fill="none" stroke="#fff" stroke-width="1.4" stroke-linecap="round"/>
<path d="M1159.0,406.0 Q1179.0,399.0 1195.5,395.9 Q1212.0,392.7 1231.0,390.4 L1250.0,388.0" fill="none" stroke="#fff" stroke-width="1.4" stroke-linecap="round"/>
<path d="M1142.8,368.0 Q1169.0,366.0 1182.3,363.5 Q1195.6,361.0 1212.1,362.0 Q1228.6,363.0 1243.3,362.0 L1258.0,361.0" fill="none" stroke="#fff" stroke-width="1.4" stroke-linecap="round"/>
<path d="M1139.5,406.0 Q1146.0,419.0 1154.3,415.8 Q1162.6,412.5 1158.8,406.2 L1155.0,400.0" fill="none" stroke="#fff" stroke-width="1.4" stroke-linecap="round"/>
<path d="M1171.0,439.0 Q1195.6,435.6 1212.1,431.3 Q1228.6,427.0 1239.3,426.0 L1250.0,425.0" fill="none" stroke="#fff" stroke-width="1.4" stroke-linecap="round"/>
<path d="M1129.5,468.6 Q1162.6,460.0 1179.1,457.5 Q1195.6,455.0 1212.8,452.5 L1230.0,450.0" fill="none" stroke="#fff" stroke-width="1.4" stroke-linecap="round"/>
<path d="M1147.0,274.0 Q1152.0,304.0 1155.5,313.0 L1159.0,322.0" fill="none" stroke="#fff" stroke-width="1.4" stroke-linecap="round"/>
<path d="M1169.0,267.8 Q1175.5,296.0 1178.8,309.0 L1182.0,322.0" fill="none" stroke="#fff" stroke-width="1.4" stroke-linecap="round"/>
<path d="M1145.8,302.5 Q1165.6,299.0 1182.1,296.5 Q1198.6,294.0 1215.2,292.5 L1231.7,291.0" fill="none" stroke="#fff" stroke-width="1.4" stroke-linecap="round"/>
<path d="M1190.0,264.5 Q1195.0,287.6 1194.3,304.8 L1193.7,322.0" fill="none" stroke="#fff" stroke-width="1.4" stroke-linecap="round"/>
<path d="M1175.5,261.0 Q1215.0,251.0 1232.5,247.0 L1250.0,243.0" fill="none" stroke="#fff" stroke-width="1.4" stroke-linecap="round"/>
<path d="M1207.0,271.0 Q1231.7,264.5 1240.8,266.2 Q1250.0,268.0 1265.0,265.0 L1280.0,262.0" fill="none" stroke="#fff" stroke-width="1.4" stroke-linecap="round"/>
<path d="M1207.0,304.0 Q1231.7,314.0 1240.8,316.0 L1250.0,318.0" fill="none" stroke="#fff" stroke-width="1.4" stroke-linecap="round"/>
<path d="M1357.6,233.0 Q1379.0,208.0 1381.5,190.0 L1384.0,172.0" fill="none" stroke="#fff" stroke-width="1.4" stroke-linecap="round"/>
<path d="M1280.0,286.0 Q1313.0,279.0 1327.9,273.4 Q1342.8,267.8 1360.9,266.9 Q1379.0,266.0 1384.0,262.8 L1389.0,259.5" fill="none" stroke="#fff" stroke-width="1.4" stroke-linecap="round"/>
<path d="M1309.7,251.0 Q1313.0,290.0 1313.0,306.0 Q1313.0,322.0 1316.5,341.0 Q1320.0,360.0 1319.0,380.0 L1318.0,400.0" fill="none" stroke="#fff" stroke-width="1.4" stroke-linecap="round"/>
<path d="M1280.0,188.5 Q1300.0,180.0 1305.0,176.0 L1310.0,172.0" fill="none" stroke="#fff" stroke-width="1.4" stroke-linecap="round"/>
<path d="M1262.0,300.0 Q1290.0,296.0 1300.0,298.0 L1310.0,300.0" fill="none" stroke="#fff" stroke-width="1.4" stroke-linecap="round"/>
<path d="M1262.0,330.0 Q1290.0,332.0 1295.0,338.5 Q1300.0,345.0 1315.0,342.5 L1330.0,340.0" fill="none" stroke="#fff" stroke-width="1.4" stroke-linecap="round"/>
<path d="M1262.0,370.0 Q1290.0,366.0 1305.0,369.0 Q1320.0,372.0 1335.0,370.0 L1350.0,368.0" fill="none" stroke="#fff" stroke-width="1.4" stroke-linecap="round"/>
<path d="M1200.0,240.0 Q1230.0,232.0 1246.0,231.0 Q1262.0,230.0 1276.0,235.0 L1290.0,240.0" fill="none" stroke="#fff" stroke-width="1.4" stroke-linecap="round"/>
<path d="M1330.0,172.0 Q1340.0,195.0 1350.0,197.5 L1360.0,200.0" fill="none" stroke="#fff" stroke-width="1.4" stroke-linecap="round"/>
<path d="M1400.0,172.0 Q1395.0,190.0 1407.5,197.5 Q1420.0,205.0 1435.0,202.5 L1450.0,200.0" fill="none" stroke="#fff" stroke-width="1.4" stroke-linecap="round"/>
<path d="M1430.0,300.0 Q1420.0,330.0 1410.0,340.0 Q1400.0,350.0 1390.0,355.0 Q1380.0,360.0 1365.0,380.0 Q1350.0,400.0 1340.0,410.0 L1330.0,420.0" fill="none" stroke="#fff" stroke-width="1.4" stroke-linecap="round"/>
<path d="M1300.0,420.0 Q1330.0,410.0 1345.0,415.0 Q1360.0,420.0 1380.0,417.5 L1400.0,415.0" fill="none" stroke="#fff" stroke-width="1.4" stroke-linecap="round"/>
<path d="M1500.0,172.0 L1510.0,190.0" fill="none" stroke="#fff" stroke-width="1.4" stroke-linecap="round"/>
<path d="M1590.0,172.0 Q1600.0,185.0 1620.0,182.5 Q1640.0,180.0 1660.0,190.0 Q1680.0,200.0 1685.0,215.0 Q1690.0,230.0 1695.0,237.5 L1700.0,245.0" fill="none" stroke="#fff" stroke-width="1.4" stroke-linecap="round"/>
<path d="M1575.0,218.4 Q1610.0,219.0 1615.0,224.5 Q1620.0,230.0 1635.0,236.0 Q1650.0,242.0 1655.0,241.0 Q1660.0,240.0 1670.0,245.0 Q1680.0,250.0 1690.0,265.0 Q1700.0,280.0 1704.0,290.0 Q1708.0,300.0 1714.0,305.0 L1720.0,310.0" fill="none" stroke="#fff" stroke-width="1.4" stroke-linecap="round"/>
<path d="M1700.0,245.0 Q1740.0,235.0 1760.0,232.5 Q1780.0,230.0 1790.0,229.0 L1800.0,228.0" fill="none" stroke="#fff" stroke-width="1.4" stroke-linecap="round"/>
<path d="M1720.0,310.0 Q1740.0,325.0 1735.0,332.5 Q1730.0,340.0 1725.0,347.5 Q1720.0,355.0 1712.5,360.0 Q1705.0,365.0 1702.5,372.5 L1700.0,380.0" fill="none" stroke="#fff" stroke-width="1.4" stroke-linecap="round"/>
<path d="M1700.0,245.0 Q1695.0,270.0 1687.5,285.0 Q1680.0,300.0 1672.0,312.5 L1664.0,325.0" fill="none" stroke="#fff" stroke-width="1.4" stroke-linecap="round"/>
<path d="M1800.0,172.0 Q1830.0,190.0 1845.0,195.0 Q1860.0,200.0 1870.0,215.0 Q1880.0,230.0 1890.0,245.0 L1900.0,260.0" fill="none" stroke="#fff" stroke-width="1.4" stroke-linecap="round"/>
<path d="M1760.0,172.0 Q1765.0,200.0 1762.5,215.0 Q1760.0,230.0 1765.0,250.0 Q1770.0,270.0 1790.0,280.0 Q1810.0,290.0 1835.0,295.0 L1860.0,300.0" fill="none" stroke="#fff" stroke-width="1.4" stroke-linecap="round"/>
<path d="M1866.0,305.0 Q1900.0,310.0 1909.0,314.0 L1918.0,318.0" fill="none" stroke="#fff" stroke-width="1.4" stroke-linecap="round"/>
<path d="M1835.0,340.0 Q1850.0,400.0 1860.0,415.0 Q1870.0,430.0 1875.0,445.0 L1880.0,460.0" fill="none" stroke="#fff" stroke-width="1.4" stroke-linecap="round"/>
<path d="M1499.5,355.3 Q1525.0,345.4 1542.0,339.9 Q1559.0,334.5 1566.9,338.9 Q1574.8,343.4 1594.6,350.4 Q1614.4,357.3 1620.2,355.8 Q1626.0,354.3 1638.0,354.8 Q1650.0,355.3 1657.0,346.4 Q1664.0,337.5 1664.0,331.6 Q1664.0,325.6 1668.9,320.1 Q1673.8,314.7 1680.8,314.2 Q1687.7,313.7 1693.8,305.8 L1700.0,297.8" fill="none" stroke="#fff" stroke-width="1.4" stroke-linecap="round"/>
<path d="M1620.0,357.3 Q1618.0,379.0 1614.2,387.0 Q1610.4,395.0 1611.4,401.9 Q1612.4,408.8 1616.3,413.8 Q1620.3,418.7 1619.2,427.6 L1618.0,436.6" fill="none" stroke="#fff" stroke-width="1.4" stroke-linecap="round"/>
<path d="M1440.0,369.0 Q1456.0,389.0 1475.8,392.0 Q1495.5,395.0 1517.2,402.9 L1539.0,410.8" fill="none" stroke="#fff" stroke-width="1.4" stroke-linecap="round"/>
<path d="M1497.5,359.0 Q1495.5,408.8 1499.5,415.8 Q1503.4,422.7 1519.2,428.6 Q1535.0,434.6 1544.0,441.6 L1553.0,448.5" fill="none" stroke="#fff" stroke-width="1.4" stroke-linecap="round"/>
<path d="M1469.7,337.5 Q1460.0,355.0 1465.0,365.0 Q1470.0,375.0 1480.0,373.5 L1490.0,372.0" fill="none" stroke="#fff" stroke-width="1.4" stroke-linecap="round"/>
<path d="M1310.0,440.0 Q1320.7,471.0 1331.1,486.5 Q1341.4,502.0 1354.7,512.4 Q1368.0,522.8 1381.5,531.1 Q1395.0,539.4 1409.5,547.7 Q1424.0,556.0 1444.8,564.2 Q1465.6,572.5 1486.3,580.8 Q1507.0,589.0 1517.3,593.0 Q1527.7,597.0 1543.8,606.0 Q1560.0,615.0 1570.0,621.5 L1580.0,628.0" fill="none" stroke="#fff" stroke-width="1.4" stroke-linecap="round"/>
<path d="M1327.0,462.8 Q1362.0,460.7 1380.5,471.0 Q1399.0,481.4 1409.5,479.7 L1420.0,478.0" fill="none" stroke="#fff" stroke-width="1.4" stroke-linecap="round"/>
<path d="M1403.5,541.4 Q1453.0,520.7 1464.5,509.4 Q1476.0,498.0 1491.5,485.5 Q1507.0,473.0 1533.5,458.5 L1560.0,444.0" fill="none" stroke="#fff" stroke-width="1.4" stroke-linecap="round"/>
<path d="M1401.0,543.5 Q1341.4,585.0 1334.2,593.2 Q1327.0,601.5 1318.5,614.8 L1310.0,628.0" fill="none" stroke="#fff" stroke-width="1.4" stroke-linecap="round"/>
<path d="M1403.5,547.7 L1424.0,628.0" fill="none" stroke="#fff" stroke-width="1.4" stroke-linecap="round"/>
<path d="M1412.0,440.0 Q1416.0,460.7 1430.5,464.9 Q1445.0,469.0 1458.5,478.3 Q1472.0,487.6 1486.0,493.8 Q1500.0,500.0 1520.0,510.0 Q1540.0,520.0 1555.0,532.5 Q1570.0,545.0 1585.0,552.5 L1600.0,560.0" fill="none" stroke="#fff" stroke-width="1.4" stroke-linecap="round"/>
<path d="M1476.0,498.0 Q1510.0,540.0 1525.0,560.0 Q1540.0,580.0 1550.0,604.0 L1560.0,628.0" fill="none" stroke="#fff" stroke-width="1.4" stroke-linecap="round"/>
<path d="M1530.0,530.0 Q1560.0,560.0 1580.0,580.0 Q1600.0,600.0 1620.0,614.0 L1640.0,628.0" fill="none" stroke="#fff" stroke-width="1.4" stroke-linecap="round"/>
<path d="M1440.0,580.0 Q1480.0,600.0 1490.0,614.0 L1500.0,628.0" fill="none" stroke="#fff" stroke-width="1.4" stroke-linecap="round"/>
<path d="M1350.0,520.0 Q1330.0,540.0 1325.0,550.0 L1320.0,560.0" fill="none" stroke="#fff" stroke-width="1.4" stroke-linecap="round"/>
<path d="M1270.0,470.0 Q1300.0,490.0 1315.0,500.0 L1330.0,510.0" fill="none" stroke="#fff" stroke-width="1.4" stroke-linecap="round"/>
<path d="M1270.0,500.0 Q1290.0,520.0 1295.0,530.0 L1300.0,540.0" fill="none" stroke="#fff" stroke-width="1.4" stroke-linecap="round"/>
<path d="M1280.0,600.0 Q1300.0,590.0 1315.0,585.0 L1330.0,580.0" fill="none" stroke="#fff" stroke-width="1.4" stroke-linecap="round"/>
<path d="M1640.0,434.6 Q1660.0,460.0 1680.0,470.0 Q1700.0,480.0 1710.0,490.0 Q1720.0,500.0 1735.0,510.0 Q1750.0,520.0 1755.0,530.0 Q1760.0,540.0 1770.0,550.0 Q1780.0,560.0 1785.0,575.0 Q1790.0,590.0 1770.0,604.0 L1750.0,618.0" fill="none" stroke="#fff" stroke-width="1.4" stroke-linecap="round"/>
<path d="M1720.0,460.0 Q1740.0,490.0 1760.0,495.0 Q1780.0,500.0 1790.0,510.0 Q1800.0,520.0 1797.5,532.5 Q1795.0,545.0 1782.5,552.5 L1770.0,560.0" fill="none" stroke="#fff" stroke-width="1.4" stroke-linecap="round"/>
<path d="M1750.0,416.0 Q1760.0,440.0 1780.0,445.0 Q1800.0,450.0 1820.0,447.5 Q1840.0,445.0 1857.5,442.5 Q1875.0,440.0 1877.5,430.0 Q1880.0,420.0 1875.0,410.0 L1870.0,400.0" fill="none" stroke="#fff" stroke-width="1.4" stroke-linecap="round"/>
<path d="M1768.0,400.0 Q1750.0,380.0 1755.0,370.0 Q1760.0,360.0 1750.0,345.0 L1740.0,330.0" fill="none" stroke="#fff" stroke-width="1.4" stroke-linecap="round"/>
<path d="M1910.0,500.0 L1918.0,540.0" fill="none" stroke="#fff" stroke-width="1.4" stroke-linecap="round"/>
<path d="M1680.0,560.0 Q1690.0,590.0 1695.0,605.0 L1700.0,620.0" fill="none" stroke="#fff" stroke-width="1.4" stroke-linecap="round"/>
<path d="M1560.0,223.5 Q1572.6,222.0 1595.2,222.8 Q1617.7,223.5 1630.3,232.9 Q1642.9,242.3 1651.7,239.2 Q1660.4,236.0 1670.5,235.4 Q1680.5,234.8 1689.2,244.9 Q1698.0,254.9 1700.5,263.6 Q1703.0,272.4 1706.8,279.9 Q1710.6,287.5 1716.9,297.6 Q1723.2,307.6 1725.7,320.1 Q1728.2,332.7 1737.0,337.7 Q1745.8,342.7 1759.6,345.2 Q1773.4,347.7 1774.7,357.8 L1776.0,367.8" fill="none" stroke="#fff" stroke-width="1.4" stroke-linecap="round"/>
<path d="M1703.0,272.4 Q1725.0,250.0 1732.9,242.4 Q1740.8,234.8 1738.3,220.9 Q1735.8,207.0 1723.2,194.5 Q1710.6,182.0 1700.6,177.0 L1690.6,172.0" fill="none" stroke="#fff" stroke-width="1.4" stroke-linecap="round"/>
<path d="M1740.8,234.8 Q1786.0,233.5 1793.0,236.8 Q1800.0,240.0 1815.5,233.6 L1831.0,227.2" fill="none" stroke="#fff" stroke-width="1.4" stroke-linecap="round"/>
<path d="M1906.5,172.0 Q1906.5,207.0 1904.0,224.7 Q1901.5,242.3 1897.8,257.4 L1894.0,272.4" fill="none" stroke="#fff" stroke-width="1.4" stroke-linecap="round"/>
<path d="M1831.0,227.2 Q1833.6,267.4 1847.4,278.7 Q1861.3,290.0 1866.3,296.2 L1871.3,302.5" fill="none" stroke="#fff" stroke-width="1.4" stroke-linecap="round"/>
<path d="M1560.0,337.7 Q1585.0,347.7 1601.3,352.8 Q1617.7,357.8 1632.8,356.6 Q1647.9,355.3 1656.7,339.0 Q1665.4,322.6 1678.0,312.6 Q1690.6,302.5 1700.6,297.5 L1710.6,292.5" fill="none" stroke="#fff" stroke-width="1.4" stroke-linecap="round"/>
<path d="M1713.0,302.5 Q1725.7,312.6 1723.2,322.6 Q1720.7,332.7 1728.2,340.2 Q1735.8,347.7 1740.8,350.2 L1745.8,352.8" fill="none" stroke="#fff" stroke-width="1.4" stroke-linecap="round"/>
<path d="M1642.9,320.0 L1647.9,347.7" fill="none" stroke="#fff" stroke-width="1.4" stroke-linecap="round"/>
<path d="M1620.0,352.8 L1617.7,400.0" fill="none" stroke="#fff" stroke-width="1.4" stroke-linecap="round"/>
<path d="M1838.7,337.7 Q1848.7,362.8 1852.3,381.4 L1856.0,400.0" fill="none" stroke="#fff" stroke-width="1.4" stroke-linecap="round"/>
<path d="M1806.0,347.7 Q1811.0,372.9 1817.3,386.4 L1823.6,400.0" fill="none" stroke="#fff" stroke-width="1.4" stroke-linecap="round"/>
<path d="M1866.3,312.6 Q1894.0,312.6 1905.2,317.6 L1916.5,322.6" fill="none" stroke="#fff" stroke-width="1.4" stroke-linecap="round"/>
<polyline points="1222.0,172.0 1265.0,320.0 1290.0,400.0 1310.0,445.0 1379.0,628.0" fill="none" stroke="#c5c8cd" stroke-width="1"/>
<path d="M1225.0,222.0 Q1250.0,212.0 1266.5,208.3 Q1283.0,204.7 1293.9,204.4 Q1304.8,204.2 1315.4,207.9 Q1326.0,211.6 1336.0,219.8 Q1346.0,228.0 1357.5,236.3 Q1369.0,244.7 1380.5,250.3 Q1392.0,256.0 1403.7,263.5 Q1415.4,271.0 1422.0,274.4 Q1428.6,277.7 1435.2,282.6 Q1441.8,287.6 1445.2,292.6 Q1448.5,297.5 1450.2,308.6 Q1452.0,319.6 1460.8,328.6 Q1469.7,337.5 1475.7,337.0 Q1481.6,336.5 1490.5,346.9 Q1499.5,357.3 1511.2,369.1 Q1523.0,381.0 1536.0,399.9 Q1549.0,418.7 1557.9,426.6 Q1566.8,434.6 1570.8,439.6 Q1574.8,444.5 1588.7,451.2 Q1602.5,458.0 1608.5,462.0 Q1614.6,466.0 1621.2,473.9 Q1627.7,481.8 1638.2,493.4 Q1648.7,505.0 1653.8,518.3 Q1659.0,531.6 1657.3,542.1 Q1655.7,552.6 1650.3,561.8 Q1645.0,571.0 1637.5,580.5 Q1630.0,590.0 1620.0,609.0 L1610.0,628.0" fill="none" stroke="#fff" stroke-width="3.6" stroke-linecap="round"/>
<path d="M1392.0,256.0 Q1405.5,247.0 1424.5,252.5 Q1443.5,258.0 1451.8,250.5 Q1460.0,243.0 1465.0,234.8 Q1470.0,226.5 1475.0,223.6 Q1480.0,220.7 1508.3,209.6 Q1536.7,198.4 1541.7,197.7 Q1546.7,197.0 1552.8,184.5 L1559.0,172.0" fill="none" stroke="#fff" stroke-width="3.6" stroke-linecap="round"/>
<path d="M1576.7,440.5 Q1618.0,436.6 1634.0,433.6 Q1650.0,430.6 1660.8,427.3 Q1671.5,424.0 1688.5,418.8 Q1705.5,413.6 1717.2,411.6 Q1729.0,409.7 1739.5,412.9 Q1750.0,416.0 1759.2,410.9 Q1768.5,405.7 1769.2,397.9 Q1770.0,390.0 1770.0,384.0 Q1770.0,378.0 1773.0,375.4 Q1776.0,372.9 1789.8,365.4 Q1803.5,357.8 1821.1,347.8 Q1838.7,337.7 1852.3,321.4 Q1866.0,305.0 1872.5,291.2 Q1879.0,277.5 1889.0,266.2 Q1899.0,254.9 1908.5,249.9 L1918.0,244.8" fill="none" stroke="#fff" stroke-width="3.6" stroke-linecap="round"/>
<path d="M1198.6,205.0 Q1195.0,238.0 1188.5,246.3 Q1182.0,254.6 1173.8,261.2 Q1165.6,267.8 1157.3,271.1 Q1149.0,274.4 1140.8,272.7 Q1132.6,271.0 1127.7,276.0 L1122.7,281.0" fill="none" stroke="#fff" stroke-width="3.6" stroke-linecap="round"/>
<polygon points="320.0,172.0 1210.5,172.0 1207.0,194.0 1205.0,200.6 1193.0,201.2 1195.0,213.8 1190.7,227.0 1183.0,233.7 1177.4,239.2 1180.7,248.0 1173.0,255.7 1157.6,259.0 1142.5,257.9 1132.6,251.3 1124.3,254.6 1122.7,264.5 1112.8,274.4 1097.9,284.3 1104.5,291.0 1112.8,300.8 1116.0,322.0 1115.5,353.0 1113.0,386.0 1112.0,399.0 1119.6,414.0 1129.5,425.7 1136.0,435.6 1144.4,448.8 1145.0,460.0 1146.9,493.7 1163.7,514.3 1173.0,533.0 1195.5,540.5 1214.0,553.6 1234.9,570.5 1253.6,587.3 1272.3,606.0 1285.4,615.4 1300.0,619.0 1306.0,628.0 320.0,628.0" fill="#9cc0f9"/>
<polyline points="1173,533 1195.5,540.5 1214,553.6 1234.9,570.5 1253.6,587.3 1272.3,606 1287,614" fill="none" stroke="#fbe9b8" stroke-width="5"/>
<path d="M1176.0,262.0 Q1195.0,253.5 1206.0,250.2 Q1217.0,247.0 1225.8,242.5 Q1234.7,238.0 1252.3,226.3 L1270.0,214.7" fill="none" stroke="#7eaaf6" stroke-width="1.8"/>
<path d="M1625.0,172.0 Q1620.0,197.0 1620.0,204.5 Q1620.0,212.0 1615.0,215.2 Q1610.0,218.4 1592.5,218.4 Q1575.0,218.4 1567.5,222.7 Q1560.0,227.0 1554.5,232.0 Q1549.0,237.0 1537.8,246.0 Q1526.6,255.0 1514.0,253.5 Q1501.5,252.0 1492.8,261.0 Q1484.0,270.0 1475.0,278.8 Q1466.0,287.6 1454.8,291.3 Q1443.7,295.0 1431.2,297.5 Q1418.6,300.0 1409.8,311.4 Q1401.0,322.7 1397.2,331.4 Q1393.5,340.0 1399.8,348.9 Q1406.0,357.9 1407.2,365.4 Q1408.5,373.0 1419.8,375.5 Q1431.0,378.0 1438.5,389.0 Q1446.0,400.0 1446.4,402.9 Q1446.8,405.7 1442.9,417.4 Q1439.0,429.0 1429.8,437.0 Q1420.6,445.0 1415.3,440.5 Q1410.0,436.0 1398.2,436.0 Q1386.5,436.0 1372.1,439.2 Q1357.7,442.4 1344.6,445.0 Q1331.5,447.7 1315.8,445.7 Q1300.0,443.7 1273.2,444.9 Q1246.5,446.0 1251.8,449.5 Q1257.0,453.0 1254.5,464.8 Q1252.0,476.6 1260.0,481.8 Q1268.0,487.0 1269.0,499.0 Q1270.0,511.0 1268.5,516.5 Q1267.0,522.0 1276.0,528.5 Q1285.0,535.0 1291.8,541.5 Q1298.5,548.0 1303.2,556.5 Q1308.0,565.0 1311.5,572.5 Q1315.0,580.0 1316.5,590.0 L1318.0,600.0" fill="none" stroke="#7eaaf6" stroke-width="1.8"/>
<polyline points="1213.0,172.0 1208.0,195.0 1209.0,210.0 1216.0,228.0 1223.0,245.0 1238.0,285.0 1250.0,320.0 1257.0,340.0 1260.0,358.0 1258.0,403.0 1257.0,427.0 1245.0,439.0 1235.0,452.0 1236.0,465.0 1240.0,475.0 1250.0,503.0 1265.0,529.0 1289.0,567.0 1308.0,591.0 1321.0,615.0 1327.0,628.0" fill="none" stroke="#eba41e" stroke-width="6" stroke-linejoin="round"/>
<polyline points="1213.0,172.0 1208.0,195.0 1209.0,210.0 1216.0,228.0 1223.0,245.0 1238.0,285.0 1250.0,320.0 1257.0,340.0 1260.0,358.0 1258.0,403.0 1257.0,427.0 1245.0,439.0 1235.0,452.0 1236.0,465.0 1240.0,475.0 1250.0,503.0 1265.0,529.0 1289.0,567.0 1308.0,591.0 1321.0,615.0 1327.0,628.0" fill="none" stroke="#fdd663" stroke-width="3" stroke-linejoin="round"/>
<line x1="320" y1="310" x2="413" y2="310" stroke="#c9dbfb" stroke-width="1"/><line x1="925" y1="310" x2="1116" y2="310" stroke="#c9dbfb" stroke-width="1"/>
<path d="M1062,268 q4,-2 5,4 q0,6 -2,8 q-4,-4 -3,-12z" fill="#e8eaed"/>
<path d="M1126,318 q6,-4 8,4 q-1,9 -6,12 q-4,-6 -2,-16z" fill="#9cc0f9"/>
<line class="breakwater" x1="1142" y1="232" x2="1168" y2="212" stroke="#e8eaed" stroke-width="1.5"/><line x1="1168" y1="248" x2="1177" y2="258" stroke="#e8eaed" stroke-width="1.2"/>
<path d="M1280,572 q4,-5 9,-4 l0,10 q-5,3 -9,0z" fill="#a8dab5"/><path d="M1338,198 l5,-8 l2,1 l-5,8z" fill="#a8dab5"/>
<text class="ml" x="978" y="244" font-size="14" fill="#5e7c88" font-weight="normal" textLength="141.0" lengthAdjust="spacingAndGlyphs" >Ketchchimalai Mosque</text>
<path d="M1132.5,252.4 L1124.1,239.9 A10.1,10.1 0 1 1 1140.9,239.9 Z" fill="#7b8f9a" stroke="#fff" stroke-width="0.8"/>
<path d="M1125.7,239.3 v-6.4 q1.4,-2.7 2.7,0 v6.4z M1129.8,239.3 v-8.2 q2.7,-4.5 5.5,0 v8.2z M1136.6,239.3 v-6.4 q1.4,-2.7 2.7,0 v6.4z" fill="#fff"/>
<text class="ml" x="1282.9" y="249" font-size="16" fill="#222" font-weight="normal" textLength="64.3" lengthAdjust="spacingAndGlyphs" >Beruwala</text>
<text class="ml" x="1158" y="211.6" font-size="13" fill="#1967d2" font-weight="normal" textLength="51.0" lengthAdjust="spacingAndGlyphs" >Beruwala</text>
<rect x="1211.2" y="200" width="12.6" height="13.2" rx="2.2" fill="#1a73e8" stroke="#fff" stroke-width="0.8"/>
<path d="M1214.3,203.6 h6.4 v4.5 l1,2 h-2 l-1,-1.2 h-2.4 l-1,1.2 h-2 l1,-2z" fill="#fff"/><circle cx="1215.9" cy="205.4" r="0.8" fill="#1a73e8"/><circle cx="1219.1" cy="205.4" r="0.8" fill="#1a73e8"/>
<text class="ml" x="782" y="313.4" font-size="14" fill="#5e7c88" font-weight="normal" textLength="60.6" lengthAdjust="spacingAndGlyphs" >Moragalla</text>
<text class="ml" x="751.7" y="326.9" font-size="14" fill="#5e7c88" font-weight="normal" textLength="90.5" lengthAdjust="spacingAndGlyphs" >School Ground</text>
<path d="M855.6,329.0 L847.2,315.2 A9.9,9.9 0 1 1 864.1,315.2 Z" fill="#7b8f9a" stroke="#fff" stroke-width="0.8"/>
<path d="M848.8,309.6 L855.6,305.6 L862.5,309.6 L855.6,313.0z M851.7,311.5 v3.4 q3.9,2.5 7.9,0 v-3.4" fill="#fff"/>
<text class="ml" x="972.4" y="352" font-size="14" fill="#5e7c88" font-weight="normal" textLength="142.6" lengthAdjust="spacingAndGlyphs" >Masjid Al Abrar-Garand</text>
<text class="ml" x="1005.5" y="365.6" font-size="14" fill="#5e7c88" font-weight="normal" textLength="109.5" lengthAdjust="spacingAndGlyphs" >Mosque,Beruwala</text>
<path d="M1129.3,366.6 L1121.2,355.0 A9.9,9.9 0 1 1 1137.4,355.0 Z" fill="#7b8f9a" stroke="#fff" stroke-width="0.8"/>
<path d="M1122.6,354.2 v-6.2 q1.3,-2.7 2.7,0 v6.2z M1126.6,354.2 v-8.0 q2.7,-4.5 5.3,0 v8.0z M1133.3,354.2 v-6.2 q1.3,-2.7 2.7,0 v6.2z" fill="#fff"/>
<text class="ml" x="1766.4" y="269.4" font-size="15" fill="#222" font-weight="normal" textLength="74.0" lengthAdjust="spacingAndGlyphs" >Kirantidiya</text>
<text class="ml" x="1636.4" y="293.5" font-size="9.4" fill="#5a5e63" font-weight="bold" textLength="91.1" lengthAdjust="spacing" style="stroke-width:1.6px" >BUNWALAKANDA</text>
<text class="ml" x="1438.7" y="321.5" font-size="9.4" fill="#5a5e63" font-weight="bold" textLength="48.5" lengthAdjust="spacing" style="stroke-width:1.6px" >PINHENA</text>
<text class="ml" x="1200.8" y="542.4" font-size="9.4" fill="#5a5e63" font-weight="bold" textLength="67.4" lengthAdjust="spacing" style="stroke-width:1.6px" >MORAGALLA</text>
<text class="ml" x="1310" y="432.7" font-size="13.5" fill="#1967d2" font-weight="normal" textLength="58.7" lengthAdjust="spacingAndGlyphs" >Hettimulla</text>
<rect x="1295.2" y="422" width="12.5" height="13.0" rx="2.2" fill="#1a73e8" stroke="#fff" stroke-width="0.8"/>
<path d="M1298.2,425.5 h6.4 v4.5 l1,2 h-2 l-1,-1.2 h-2.4 l-1,1.2 h-2 l1,-2z" fill="#fff"/><circle cx="1299.9" cy="427.3" r="0.8" fill="#1a73e8"/><circle cx="1303.0" cy="427.3" r="0.8" fill="#1a73e8"/>
<text class="ml" x="1755.5" y="426.3" font-size="14" fill="#2b8a48" font-weight="normal" textLength="79.8" lengthAdjust="spacingAndGlyphs" >Brief Garden,</text>
<text class="ml" x="1746.7" y="439.7" font-size="14" fill="#2b8a48" font-weight="normal" textLength="88.3" lengthAdjust="spacingAndGlyphs" >by Bevis Bawa</text>
<path d="M1848.7,442.3 L1840.2,428.3 A10.0,10.0 0 1 1 1857.2,428.3 Z" fill="#34a853" stroke="#fff" stroke-width="0.8"/>
<path d="M1848.7,416.6 l4.0,5.5 h-2.0 l3.5,5.0 h-11.0 l3.5,-5.0 h-2.0z M1847.7,426.6 h2.0 v3.5 h-2.0z" fill="#fff"/>
<text class="ml" x="1475.5" y="471.2" font-size="14" fill="#2b8a48" font-weight="normal" textLength="115.1" lengthAdjust="spacingAndGlyphs" >Sugathathasa mini</text>
<path d="M1568.5,504.5 L1560.0,490.8 A10.0,10.0 0 1 1 1577.0,490.8 Z" fill="#34a853" stroke="#fff" stroke-width="0.8"/>
<circle cx="1568.5" cy="485.5" r="3.2" fill="#fff"/>
<text class="ml" x="1001.5" y="489.7" font-size="14" fill="#e0336a" font-weight="normal" textLength="150.0" lengthAdjust="spacingAndGlyphs" >Cinnamon Bey Beruwala</text>
<path d="M1164.5,497.5 L1156.2,484.7 A9.9,9.9 0 1 1 1172.8,484.7 Z" fill="#ee6594" stroke="#fff" stroke-width="0.8"/>
<circle cx="1160.0" cy="478.8" r="1.7" fill="#fff"/><path d="M1162.5,484.3 L1169.0,475.8 M1164.0,474.4 q5.9,-1.5 7.4,5.4z" stroke="#fff" stroke-width="1.3" fill="#fff"/>
<text class="ml" x="1272.7" y="523.1" font-size="14" fill="#5e7c88" font-weight="normal" textLength="132.3" lengthAdjust="spacingAndGlyphs" >Kande Vihara Temple</text>
<path d="M1417.6,532.0 L1409.2,518.4 A9.9,9.9 0 1 1 1425.9,518.4 Z" fill="#7b8f9a" stroke="#fff" stroke-width="0.8"/>
<circle cx="1417.6" cy="513.2" r="4.9" fill="none" stroke="#fff" stroke-width="1.3"/><path d="M1410.7,513.2 h13.8 M1417.6,506.4 v13.8" stroke="#fff" stroke-width="0.9"/>
<text class="ml" x="1459.7" y="520.3" font-size="14" fill="#1a73e8" font-weight="normal" textLength="91.5" lengthAdjust="spacingAndGlyphs" >Chak buk Bajar</text>
<path d="M1528.8,553.6 L1520.1,540.3 A10.2,10.2 0 1 1 1537.4,540.3 Z" fill="#4e8ef5" stroke="#fff" stroke-width="0.8"/>
<rect x="1523.6" y="532.7" width="10.2" height="6.7" fill="#fff"/><path d="M1526.2,532.7 v-1.5 q2.6,-3.6 5.1,0 v1.5" fill="none" stroke="#fff" stroke-width="1"/>
<text class="ml" x="1562.5" y="543.4" font-size="14" fill="#e0336a" font-weight="normal" textLength="96.9" lengthAdjust="spacingAndGlyphs" >Hill View Resort</text>
<path d="M1673.4,552.0 L1664.9,538.6 A10.1,10.1 0 1 1 1682.0,538.6 Z" fill="#ee6594" stroke="#fff" stroke-width="0.8"/>
<circle cx="1668.9" cy="532.6" r="1.7" fill="#fff"/><path d="M1671.4,538.2 L1678.0,529.6 M1672.9,528.1 q6.1,-1.5 7.6,5.6z" stroke="#fff" stroke-width="1.3" fill="#fff"/>
<text class="ml" x="1558.6" y="589.5" font-size="15" fill="#222" font-weight="normal" textLength="93.7" lengthAdjust="spacingAndGlyphs" >Dharga Town</text>
<text class="ml" x="1421.9" y="609" font-size="14" fill="#5e7c88" font-weight="normal" textLength="89.8" lengthAdjust="spacingAndGlyphs" >SALOON BEST</text>
<text class="ml" x="1432" y="622.3" font-size="14" fill="#5e7c88" font-weight="normal" textLength="79.0" lengthAdjust="spacingAndGlyphs" >WITH NIMAL</text>
<path d="M1524.6,624.7 L1516.3,611.6 A9.8,9.8 0 1 1 1532.9,611.6 Z" fill="#7b8f9a" stroke="#fff" stroke-width="0.8"/>
<circle cx="1524.6" cy="606.4" r="3.1" fill="#fff"/>
<text class="ml" x="1611.7" y="608.3" font-size="14" fill="#5e7c88" font-weight="normal" textLength="136.3" lengthAdjust="spacingAndGlyphs" >Jungle Heart Cabanas</text>
<path d="M1760.0,616.0 L1751.7,603.6 A10.0,10.0 0 1 1 1768.3,603.6 Z" fill="#7b8f9a" stroke="#fff" stroke-width="0.8"/>
<circle cx="1760.0" cy="598.0" r="3.2" fill="#fff"/>
<text class="ml" x="1204.9" y="626.7" font-size="14" fill="#5e7c88" font-weight="normal" textLength="135.8" lengthAdjust="spacingAndGlyphs" >Kaluwamodara Bridge</text>
<path d="M1318.7,609.8 L1310.6,598.2 A9.9,9.9 0 1 1 1326.7,598.2 Z" fill="#7b8f9a" stroke="#fff" stroke-width="0.8"/>
<path d="M1312.7,593.5 h11.8 M1314.2,587.6 v9.9 M1323.1,587.6 v9.9 M1314.2,589.1 q4.4,3.9 8.9,0" fill="none" stroke="#fff" stroke-width="1.3"/>
<rect x="1231" y="468.4" width="18" height="10.3" rx="1" fill="#5d9b3c" stroke="#fff" stroke-width="0.8"/><text x="1234" y="477" font-size="9" font-weight="bold" fill="#fff" textLength="12" lengthAdjust="spacingAndGlyphs">A2</text>
<text class="ml" transform="translate(1231,281) rotate(69)" x="0" y="0" font-size="11" fill="#7a5230" textLength="46" lengthAdjust="spacingAndGlyphs">Galle Rd</text>
<text class="ml" transform="translate(1232,218) rotate(-38)" x="0" y="0" font-size="10" fill="#3c4043" textLength="23" lengthAdjust="spacingAndGlyphs">China</text>
<text class="ml" transform="translate(1252,206) rotate(-4)" x="0" y="0" font-size="10" fill="#3c4043" textLength="34" lengthAdjust="spacingAndGlyphs">Fort Rd</text>
<text class="ml" transform="translate(1832,175.5) rotate(13)" x="0" y="0" font-size="11" fill="#3c4043" textLength="27" lengthAdjust="spacingAndGlyphs">Vama-</text>
<text class="ml" transform="translate(1864,180.5) rotate(-5)" x="0" y="0" font-size="11" fill="#3c4043" textLength="35" lengthAdjust="spacingAndGlyphs">Matuga</text>
<rect x="1213.2" y="229.3" width="12.5" height="12.7" rx="2.2" fill="#1a73e8" stroke="#fff" stroke-width="0.8"/>
<path d="M1216.2,232.5 h6.6 v5.6 h-1 v1.2 h-1.2 v-1.2 h-2.2 v1.2 h-1.2 v-1.2 h-1z" fill="#fff"/><rect x="1217.0" y="233.8" width="4.8" height="1.6" fill="#1a73e8"/>
<rect x="1250" y="410" width="12.8" height="13.2" rx="2.2" fill="#1a73e8" stroke="#fff" stroke-width="0.8"/>
<path d="M1253.1,413.4 h6.6 v5.6 h-1 v1.2 h-1.2 v-1.2 h-2.2 v1.2 h-1.2 v-1.2 h-1z" fill="#fff"/><rect x="1254.0" y="414.8" width="4.8" height="1.6" fill="#1a73e8"/>
<rect x="1290" y="570.5" width="13.0" height="13.1" rx="2.2" fill="#1a73e8" stroke="#fff" stroke-width="0.8"/>
<path d="M1293.2,573.8 h6.6 v5.6 h-1 v1.2 h-1.2 v-1.2 h-2.2 v1.2 h-1.2 v-1.2 h-1z" fill="#fff"/><rect x="1294.1" y="575.2" width="4.8" height="1.6" fill="#1a73e8"/>
<rect x="1397" y="537.2" width="12.6" height="12.2" rx="2.2" fill="#1a73e8" stroke="#fff" stroke-width="0.8"/>
<path d="M1400.0,540.1 h6.6 v5.6 h-1 v1.2 h-1.2 v-1.2 h-2.2 v1.2 h-1.2 v-1.2 h-1z" fill="#fff"/><rect x="1400.9" y="541.5" width="4.8" height="1.6" fill="#1a73e8"/>
<rect x="1471.2" y="485" width="12.8" height="12.9" rx="2.2" fill="#1a73e8" stroke="#fff" stroke-width="0.8"/>
<path d="M1474.3,488.2 h6.6 v5.6 h-1 v1.2 h-1.2 v-1.2 h-2.2 v1.2 h-1.2 v-1.2 h-1z" fill="#fff"/><rect x="1475.2" y="489.6" width="4.8" height="1.6" fill="#1a73e8"/>
<rect x="1563.5" y="437.2" width="12.3" height="13.1" rx="2.2" fill="#1a73e8" stroke="#fff" stroke-width="0.8"/>
<path d="M1566.4,440.6 h6.6 v5.6 h-1 v1.2 h-1.2 v-1.2 h-2.2 v1.2 h-1.2 v-1.2 h-1z" fill="#fff"/><rect x="1567.2" y="441.9" width="4.8" height="1.6" fill="#1a73e8"/>
<rect x="1764.6" y="370.3" width="12.6" height="12.6" rx="2.2" fill="#1a73e8" stroke="#fff" stroke-width="0.8"/>
<path d="M1767.6,373.4 h6.6 v5.6 h-1 v1.2 h-1.2 v-1.2 h-2.2 v1.2 h-1.2 v-1.2 h-1z" fill="#fff"/><rect x="1768.5" y="374.8" width="4.8" height="1.6" fill="#1a73e8"/>
<rect x="1586.7" y="618.4" width="11.7" height="12.6" rx="2.2" fill="#1a73e8" stroke="#fff" stroke-width="0.8"/>
<path d="M1589.3,621.5 h6.6 v5.6 h-1 v1.2 h-1.2 v-1.2 h-2.2 v1.2 h-1.2 v-1.2 h-1z" fill="#fff"/><rect x="1590.2" y="622.9" width="4.8" height="1.6" fill="#1a73e8"/>
<path d="M1120,400.3 C1117,392 1107,386 1107,376.5 A13,13 0 1 1 1133,376.5 C1133,386 1123,392 1120,400.3Z" fill="#ea4335" stroke="#c5221f" stroke-width="0.6"/><circle cx="1120" cy="376" r="4.6" fill="#b31412"/>
<path d="M333.5,189.5 v-4 h4 M342.5,185.5 h4 v4 M346.5,194.5 v4 h-4 M337.5,198.5 h-4 v-4" fill="none" stroke="#0b3b3b" stroke-width="2.2"/>
<g font-family="Liberation Sans" font-size="17" class="ml" style="stroke-width:2px"><text x="330" y="620" fill="#4285f4">G</text><text x="343" y="620" fill="#ea4335">o</text><text x="352.5" y="620" fill="#fbbc05">o</text><text x="362" y="620" fill="#4285f4">g</text><text x="371.5" y="620" fill="#34a853">l</text><text x="375.5" y="620" fill="#ea4335">e</text></g>
<rect x="1870" y="523.6" width="40" height="80.2" rx="2" fill="#fff" style="filter:drop-shadow(0 1px 2px rgba(0,0,0,0.3))"/><path d="M1881.5,543.3 h17 M1890,535 v17" stroke="#666" stroke-width="3"/><line x1="1875" y1="563.7" x2="1905" y2="563.7" stroke="#e6e6e6" stroke-width="1"/><path d="M1881.5,584 h17" stroke="#666" stroke-width="3"/>
<rect x="1600" y="614" width="318" height="14" fill="#f5f5f5" fill-opacity="0.85"/>
<text x="1605.6" y="624.5" font-size="10" fill="#3c4043" textLength="85.2" lengthAdjust="spacingAndGlyphs">Keyboard shortcuts</text>
<text x="1704.2" y="624.5" font-size="10" fill="#3c4043" textLength="74.2" lengthAdjust="spacingAndGlyphs">Map data ©2024</text>
<text x="1790.8" y="624.5" font-size="10" fill="#3c4043" textLength="27.5" lengthAdjust="spacingAndGlyphs">Terms</text>
<text x="1830.6" y="624.5" font-size="10" fill="#3c4043" textLength="83.4" lengthAdjust="spacingAndGlyphs">Report a map error</text>
<line x1="1698.7" y1="615" x2="1698.7" y2="627" stroke="#d8d8d8" stroke-width="1"/>
<line x1="1785.5" y1="615" x2="1785.5" y2="627" stroke="#d8d8d8" stroke-width="1"/>
<line x1="1825.4" y1="615" x2="1825.4" y2="627" stroke="#d8d8d8" stroke-width="1"/>
</g>
<!-- logo -->
<g>
 <text x="18" y="28" font-family="Liberation Sans" font-weight="bold" font-style="italic" font-size="10.5" fill="#000" stroke="#000" stroke-width="0.6" textLength="40" lengthAdjust="spacingAndGlyphs">WHEELS</text>
 <text x="18" y="35.3" font-family="Liberation Sans" font-weight="bold" font-style="italic" font-size="6.8" fill="#000" stroke="#000" stroke-width="0.4" textLength="38" lengthAdjust="spacingAndGlyphs">NEXT DOOR</text>
 <rect x="16" y="36.6" width="45" height="1.3" fill="#f28a25"/>
 <path d="M60.5,15.5 Q60,11.5 62.5,10 L63.8,7.8 L65.3,9.6 L67,7.6 L68.3,9.8 Q72.8,10.8 73.6,15.5 Q74.3,21.5 70.5,24.8 Q66,26.8 62.5,24.6 Q59.6,21.5 60.5,15.5Z" fill="#f28a25" stroke="#1a1a1a" stroke-width="0.7"/>
 <ellipse cx="64" cy="15.6" rx="2.9" ry="3.1" fill="#111"/><ellipse cx="70.6" cy="16.2" rx="2.4" ry="2.9" fill="#111"/>
 <ellipse cx="64.2" cy="15.4" rx="1.5" ry="1.2" fill="#fff"/><ellipse cx="70.6" cy="16" rx="1.1" ry="1.1" fill="#fff"/>
 <circle cx="64.6" cy="15.6" r="0.6" fill="#111"/><circle cx="70.9" cy="16.2" r="0.5" fill="#111"/>
 <path d="M66.5,19.5 l1.2,-0.6 l0.4,1.6z" fill="#555"/>
 <path d="M60.8,19 q0.5,4 2.5,5.5 l-1.5,0.8 q-2,-2.5 -1,-6.3z" fill="#111"/>
 <circle cx="65.2" cy="32.4" r="4.9" fill="#fff" stroke="#111" stroke-width="1.6"/>
 <circle cx="65.2" cy="32.4" r="1.4" fill="#888"/>
 <path d="M65.2,28.5 v2.5 M65.2,33.8 v2.5 M61.3,32.4 h2.5 M66.6,32.4 h2.5 M62.5,29.7 l1.6,1.6 M66.3,33.5 l1.6,1.6 M67.9,29.7 l-1.6,1.6 M64.1,33.5 l-1.6,1.6" stroke="#666" stroke-width="0.8"/>
</g>
<!-- search icon -->
<circle cx="1072.8" cy="23.5" r="5.3" fill="none" stroke="#ff6a00" stroke-width="2.4"/>
<line x1="1077.2" y1="28" x2="1081.8" y2="32.8" stroke="#ff6a00" stroke-width="2.7" stroke-linecap="round"/>
<!-- referral people -->
<g fill="#ff6a00">
 <circle cx="1125.5" cy="23.3" r="3"/>
 <path d="M1120,31.5 v-1.8 q0,-3.3 5.5,-3.3 q5.5,0 5.5,3.3 v1.8z"/>
 <circle cx="1118.2" cy="25.3" r="2.1"/><circle cx="1133" cy="25.3" r="2.1"/>
 <path d="M1114,31.5 v-0.8 q0,-2.4 4,-2.5 l0.8,0.1 q-0.9,1 -0.9,2.4 v0.8z"/>
 <path d="M1137.2,31.5 v-0.8 q0,-2.4 -4,-2.5 l-0.8,0.1 q0.9,1 0.9,2.4 v0.8z"/>
</g>
<!-- list vehicle -->
<g fill="#ff6a00">
 <path d="M1328.5,19.6 h11.6 l4.9,6 l-4.6,6.4 h-4.6 v-7 h-7.3z"/>
 <rect x="1327" y="29.2" width="7.6" height="1.9"/>
 <rect x="1329.9" y="26.2" width="1.9" height="7.6"/>
</g>
<!-- rent key + car -->
<g fill="#ff6a00">
 <circle cx="1548.7" cy="18.5" r="2.2" fill="none" stroke="#ff6a00" stroke-width="1.6"/>
 <path d="M1550.5,17.8 h8.6 v1.6 h-1.3 l-0.9,1.9 h-1.2 l-0.6,-1.9 h-4.6z"/>
 <path d="M1546.7,24.6 q0.6,-1.6 2,-1.6 h7.4 q1.4,0 2,1.6 l1.1,3.2 v7.2 h-2.2 v-1.6 h-9.2 v1.6 h-2.2 v-7.2z M1548.5,27.2 h9.6 l-0.9,-2.6 h-7.8z" fill-rule="evenodd"/>
 <circle cx="1548.8" cy="30.3" r="0.8" fill="#024a4a"/><circle cx="1556.8" cy="30.3" r="0.8" fill="#024a4a"/>
</g>
<!-- bell -->
<g fill="none" stroke="#0a4a4a" stroke-width="1.9" stroke-linecap="round">
 <path d="M1733.2,33.5 v-7.5 q0,-5.2 4.3,-5.2 q4.3,0 4.3,5.2 v7.5"/>
 <path d="M1730.2,34.2 h14.6" stroke-width="1.8"/>
 <path d="M1729,25.3 q0.6,-3.2 2.8,-5.8"/><path d="M1746,25.3 q-0.6,-3.2 -2.8,-5.8"/>
</g>
<circle cx="1737.5" cy="19.5" r="1.1" fill="#0a4a4a"/>
<path d="M1735.8,36 h3.4 l-1.7,1.7z" fill="#0a4a4a"/>
<!-- person -->
<g fill="#ff6a00"><circle cx="1782" cy="22.5" r="4.1"/><path d="M1773.9,33.8 q0,-6 8.1,-6 q8.1,0 8.1,6z"/></g>
<!-- hamburger -->
<g stroke="#073b3a" stroke-width="2" stroke-linecap="round"><line x1="1891.5" y1="27" x2="1908.5" y2="27"/><line x1="1891.5" y1="32" x2="1908.5" y2="32"/><line x1="1891.5" y1="37" x2="1908.5" y2="37"/></g>
<!-- star -->
<path d="M87.2,127.8 l2.1,4.6 l4.6,0.5 l-3.5,3.2 l1,4.8 l-4.2,-2.5 l-4.2,2.5 l1,-4.8 l-3.5,-3.2 l4.6,-0.5z" fill="none" stroke="#ff6a00" stroke-width="2.2" stroke-linejoin="round"/>
<!-- category icons -->
<g fill="none" stroke="#15504f" stroke-width="1.2" stroke-linejoin="round">
 <!-- sedan -->
 <path d="M101.8,87 h-2.5 v-6 q0.3,-1.6 2.5,-2.3 l6,-1.6 q4,-2.5 9,-2.5 q5.3,0 9.5,3.2 l5,1.4 q3.8,1.3 4.5,4 v3.8 h-2.3"/>
 <path d="M107.5,87 h17.5"/>
 <circle cx="104.6" cy="86.7" r="2.7"/><circle cx="128.2" cy="86.7" r="2.7"/>
 <path d="M106.5,79.5 q6,-3.5 12,-3.5 q4,0 7,2.8 z" stroke-width="1"/>
 <path d="M115.4,76.3 v3.2" stroke-width="1"/>
 <!-- suv -->
 <path d="M144.5,87.5 h-5 v-7 h2.3 l3.5,-6.3 h17.9 l4.8,6.4 h6 q1,0 1,1 v6 h-2.6"/>
 <path d="M152.2,87.5 h10.5"/>
 <circle cx="148.3" cy="86.7" r="3.4"/><circle cx="166.5" cy="86.7" r="3.4"/>
 <path d="M141.8,80.6 h26.4 M150,74.5 v6 M156.8,74.5 v6"/>
 <rect x="139.5" y="77.5" width="2.3" height="4.5" fill="#15504f" stroke="none"/>
 <!-- van -->
 <path d="M378.3,88.5 h-3.6 v-14.4 q0,-1.4 1.4,-1.4 h21.6 l11.5,9.5 v6.3 h-3.7"/>
 <path d="M384.8,88.5 h12.5"/>
 <circle cx="381.3" cy="89.5" r="3.2"/><circle cx="400.8" cy="89.5" r="3.2"/>
 <rect x="377" y="76.2" width="7.3" height="5.2" rx="0.6"/><rect x="386.6" y="76.2" width="7.3" height="5.2" rx="0.6"/>
 <path d="M396.6,76.2 h2.2 l6.2,5.2 h-8.4z"/>
 <path d="M377,83.7 h20" stroke-width="0.8" stroke="#6b9393"/>
 <!-- flatbed -->
 <path d="M415.2,85.3 h21.3 v-9.6 q0,-0.9 0.9,-0.9 h10 l1.6,2.4 q1,3 1,6 v5.5 h-2.3 M438.9,88.6 h-11.4 M420.5,88.6 h-5.3 v-3.3" />
 <circle cx="423.9" cy="88.8" r="2.3"/><circle cx="441.9" cy="88.8" r="2.3"/>
 <rect x="438.6" y="77.2" width="7.4" height="4.6" rx="0.5"/>
 <path d="M415.8,86.9 h20.7" stroke-width="1.8"/>
 <!-- motorbike -->
 <circle cx="674.7" cy="86.3" r="5.7" stroke-width="1.6"/><circle cx="699.3" cy="87.2" r="5.7" stroke-width="1.6"/>
 <circle cx="674.7" cy="86.3" r="3.2" stroke-width="0.6" stroke-dasharray="1 1.2"/><circle cx="699.3" cy="87.2" r="3.2" stroke-width="0.6" stroke-dasharray="1 1.2"/>
 <path d="M668.2,74.2 L674.5,74.6 L682.3,78.6 M668.2,74.2 L683,81.6 L683.5,87.6 L692,89.2 L692.6,83 L688.3,80.6 L700.6,80.6 M682.3,78.6 Q682,73.3 687.5,73 Q691.5,73.2 693.5,77 L692.8,78.4 M694.2,72.5 Q699.8,74.5 701,78.8 L700.6,80.6 M688.3,80.6 L687.9,85 L683.8,87.8 M674.7,85.8 H683 M694.8,80.6 L698.6,86.6 M696.8,80.6 L699.3,86" stroke-width="1.3"/>
 <path d="M692.5,76.5 l2.5,-1 l1,3 l-3,0.5z" fill="#15504f" stroke="none"/>
 <!-- kick scooter -->
 <path d="M947.1,70.7 l8.6,1.6 M951.3,71.5 v16.1 M936,90.2 h10.9 l4.4,-4.8" stroke-width="1.2"/>
 <circle cx="930.9" cy="90.2" r="3" stroke-width="1.7"/><circle cx="951.5" cy="90.6" r="2.6"/>
 <!-- mobility scooter -->
 <rect x="967.3" y="70.6" width="2.6" height="9" rx="1.2" stroke-width="1.2"/>
 <path d="M969.9,75.6 h3.6 M970.2,78.6 h4.6 q0.6,0 0.6,0.5 v0.3 h-5.2" stroke-width="1.2"/>
 <path d="M968.6,79.8 v2.6 M970.7,79.8 v2.6" stroke-width="1"/>
 <path d="M962.6,86.5 q0.8,-4 4,-4.2 h5.8 v5" stroke-width="1.2"/>
 <path d="M972.6,86.6 h7.3 v1.2 h-7.3z" stroke-width="1" fill="#15504f"/>
 <path d="M970.6,90.1 h14.7 M982.2,87.6 q1,-5 3,-6.2 q2.5,-1.2 4.5,0.4 q3.5,3 5.5,8.2 h-1.8" stroke-width="1.2"/>
 <path d="M976.2,72.9 q2,-1.6 4,-1.2 q2.6,0.8 3.6,2.8 l1.8,4.6" stroke-width="1.3"/>
 <rect x="986" y="74.3" width="7.8" height="4.4" stroke-width="1.1"/><path d="M989.9,74.3 v4.4 M986,76.5 h7.8" stroke-width="0.7"/>
 <circle cx="966.7" cy="89" r="4" stroke-width="1.7"/><circle cx="988.9" cy="89.2" r="3.4" stroke-width="1.6"/>
 <rect x="993.6" y="89.6" width="2.8" height="1.6" fill="#15504f" stroke-width="0.6"/>
 <!-- wheelchair -->
 <path d="M1244.3,71.4 h-4.6 q-1.6,0 -1.7,1.8 l-0.4,7.8 M1231.3,75.4 h6.4 M1237.8,78.2 h-8.6 q-3,0 -3,3 v4.5 h5 M1226.2,85.7 l-2.8,2.6" stroke-width="1.5" stroke-linecap="round"/>
 <circle cx="1225.1" cy="90.3" r="2.6" stroke-width="1.5"/>
 <circle cx="1237.5" cy="86.8" r="5.9" stroke-width="1.6"/>
 <circle cx="1237.5" cy="86.8" r="3.3" stroke-width="0.8" stroke-dasharray="1.6 1.2"/>
 <!-- bicycle -->
 <circle cx="1477.9" cy="86.3" r="5.8" stroke-width="1.4"/><circle cx="1498.3" cy="86.3" r="5.8" stroke-width="1.4"/>
 <path d="M1478,87 h10.3 l5.9,-10 h-10.3 l4.4,10 M1483.9,77 l-5.9,10 M1481.8,74.6 h3.8 M1483,74.6 l0.9,2.4 M1493.9,76.8 l4.4,9.5 M1492.4,71.5 q1.5,-1.6 2.8,-1.4 l-1.8,1 l0.8,5.6" stroke-width="1.3"/>
 <!-- dots -->
 <g stroke="#5b8b8a" stroke-width="1.5"><ellipse cx="1514" cy="82.4" rx="3.5" ry="3.9"/><ellipse cx="1531" cy="82.4" rx="3.5" ry="3.9"/><ellipse cx="1548" cy="82.4" rx="3.5" ry="3.9"/></g>
</g>
<!-- trailer -->
<g fill="#0b4a4a">
 <path d="M1768.5,76.3 h20.5 q1,0 1,1 v3.5 h8 q1,0 1,0.8 v0.6 h-3.2 v1.2 l-0.8,1.4 l-0.8,-1.4 v-1.2 h-3.7 v0.9 q0,1.1 -1.2,1.1 h-3.7 q-0.8,-3.2 -3.8,-3.6 q-2.2,-0.2 -3.2,1.4 q-1,-1.6 -3.2,-1.4 q-3,0.3 -3.8,3.6 h-1.7 q-1.1,0 -1.1,-1.1 v-6 q0,-1 1,-1z"/>
 <circle cx="1775.6" cy="85" r="2.7"/><circle cx="1780.3" cy="85" r="2.7"/>
 <circle cx="1775.6" cy="85" r="1" fill="#e5e5e5"/><circle cx="1780.3" cy="85" r="1" fill="#e5e5e5"/>
</g>

<defs>
 <clipPath id="c1"><rect x="660" y="691" width="194" height="199"/></clipPath>
 <clipPath id="c2"><rect x="987" y="691" width="267" height="200"/></clipPath>
 <clipPath id="c3"><rect x="1350" y="691" width="266.5" height="199.5"/></clipPath>
 <linearGradient id="sky3" x1="0" y1="0" x2="0" y2="1"><stop offset="0" stop-color="#7fa3dc"/><stop offset="0.45" stop-color="#a9b9dc"/><stop offset="1" stop-color="#d9c6c8"/></linearGradient>
 <linearGradient id="grass3" x1="0" y1="0" x2="0" y2="1"><stop offset="0" stop-color="#7f9a4e"/><stop offset="0.5" stop-color="#7c8c4c"/><stop offset="1" stop-color="#8a8c62"/></linearGradient>
 <linearGradient id="floor2" x1="0" y1="0" x2="1" y2="1"><stop offset="0" stop-color="#4f4a3d"/><stop offset="0.6" stop-color="#625d50"/><stop offset="1" stop-color="#7b7d80"/></linearGradient>
 <linearGradient id="gnd1" x1="0" y1="0" x2="0" y2="1"><stop offset="0" stop-color="#b3b0a8"/><stop offset="1" stop-color="#c2bdb2"/></linearGradient>
</defs>
<!-- truck -->
<g clip-path="url(#c1)">
 <rect x="660" y="691" width="194" height="199" fill="#f3f3f1"/>
 <rect x="660" y="691" width="194" height="20" fill="#1d0c04"/>
 <rect x="660" y="746" width="194" height="118" fill="url(#gnd1)"/>
 <path d="M660,748 q6,-16 14,-15 q7,-6 13,2 q5,6 2,13 h-29z" fill="#8b7a4e"/>
 <path d="M820,748 q8,-14 18,-13 q9,-3 16,-1 v14z" fill="#50693e"/>
 <rect x="660" y="747.6" width="16" height="18.4" fill="#2f6fc0"/>
 <rect x="677" y="746.4" width="25" height="17" fill="#c8b99a"/>
 <rect x="702" y="747" width="14" height="17" fill="#90969b"/>
 <rect x="826" y="749" width="28" height="17" fill="#9aa0a5"/>
 <rect x="840" y="766" width="14" height="10" fill="#6e7276"/>
 <path d="M671,766 h44 v42 l-10,5 l-33,-30z" fill="#2b94ab"/>
 <path d="M679.5,767.3 h34.5 v8.7 l-34.5,-5z" fill="#5e4b3a"/>
 <path d="M694,798 l22,0 v14 l-22,-4z" fill="#3a3a3a"/>
 <circle cx="685.6" cy="800.5" r="8" fill="#1e1e1e"/><circle cx="685.6" cy="800.5" r="4" fill="#c4c4c4"/>
 <path d="M716,732 l42,-5.5 l64,6.5 l17,33 l6,27 l-1,20 l-67,12 l-20,8 l-39,-20 l-3,-49z" fill="#2a96ae"/>
 <path d="M759.3,728 l62.7,5 l17.2,33 l-68.8,5z" fill="#c3ccd0"/>
 <path d="M759.3,728 l62.7,5 l17.2,33" fill="none" stroke="#2c4c58" stroke-width="1.2"/>
 <path d="M723.7,732.9 l34.3,-1.2 v31.9 l-31.8,0z" fill="#52595e"/>
 <path d="M743,733 h14 v14 h-14z" fill="#e5e7e8"/>
 <path d="M760.6,800.5 l84.7,-9.9 l-1.3,22.2 l-81,9.8z" fill="#a0a4a6"/>
 <rect x="761.8" y="805.4" width="21" height="9.8" fill="#e68a27"/>
 <path d="M775,819.5 l25,-2.5 v10 l-25,3z" fill="#e9ecee"/>
 <path d="M760,822 l85,-9 v10 l-62,12 l-23,4z" fill="#2a2a2a"/>
 <path d="M772.8,832.4 l71.2,-14.7 v12.3 l-70,19.6z" fill="#b1b3b4"/>
 <path d="M758,832.4 h15 v19.6 h-15z" fill="#262626"/>
 <circle cx="733.5" cy="832.4" r="12.9" fill="#1b1b1b"/><circle cx="733.5" cy="832.4" r="6" fill="#c9c9c9"/>
 <rect x="660" y="864" width="194" height="26" fill="#1d0c04"/>
 <text x="732" y="880.6" font-size="12.5" fill="#e8314a" textLength="68" lengthAdjust="spacingAndGlyphs">Test Sample</text>
</g>
<!-- honda -->
<g clip-path="url(#c2)">
 <rect x="987" y="691" width="267" height="200" fill="url(#floor2)"/>
 <path d="M987,847 h70 l5,44 h-75z" fill="#8b9199"/>
 <path d="M1146,691 h108 v200 h-108z" fill="#cfd3d8"/>
 <path d="M1192,691 h30 v40 h-30z" fill="#3a3d42" opacity="0.7"/>
 <path d="M1146.5,754 h18.5 v93 h-18.5z" fill="#56718f"/>
 <path d="M1236,692 l-62,132" stroke="#8e9398" stroke-width="3"/>
 <path d="M1225,720 l4,60" stroke="#b33a3a" stroke-width="1"/>
 <path d="M1211,784 h43 v107 h-43z" fill="#ece2d8"/>
 <path d="M1095.6,691 h57.8 v62 q-6,15 -28,15 q-26,-1 -29.8,-20z" fill="#f3f3f5"/>
 <path d="M1135,699 h16 v41.5 l-16,-8z" fill="#1f2b38"/>
 <path d="M1056,740 q6,-22 30,-20 l45,12 q18,8 20,30 v52 q-2,22 -20,24 l-48,-4 q-24,-6 -28,-30z" fill="#f1f1f3"/>
 <path d="M1042,731 h14 l0,84 h-14z" fill="#2a2924" opacity="0.8"/>
 <path d="M1056,724 l22,-2 l2,72 l-20,-2z" fill="#24252a"/>
 <path d="M1116,752 l28,-1 v70 l-28,1z" fill="#1e3734"/>
 <path d="M1056,891 q20,-16 60,-16 q16,0 21,16z" fill="#44474c"/>
<path d="M1052.8,847 l167.7,1.5 v33 l-167.7,-3z" fill="#c9df2c"/>
 <rect x="1151" y="700" width="19" height="7" fill="#c6dc30"/>
 <rect x="1156" y="739" width="30" height="8.5" fill="#c6dc30"/>
 <rect x="1147" y="785.6" width="26" height="6" fill="#c6dc30"/>
 <rect x="1153" y="806" width="13" height="5" fill="#c6dc30"/>
 <rect x="1014.7" y="849" width="34.7" height="11.7" fill="#e6e2d6"/>
 </g>
<!-- ractis -->
<g clip-path="url(#c3)">
 <rect x="1350" y="691" width="267" height="55" fill="url(#sky3)"/>
 <path d="M1350,697 q15,-5 35,-2 q20,-3 35,3 q-25,6 -70,4z" fill="#b6a9c8" opacity="0.9"/>
 <path d="M1375,712 q20,-5 40,-2 q25,-3 40,4 q-30,5 -80,2z" fill="#d7cdd8" opacity="0.9"/>
 <path d="M1350,722 q25,-8 50,-4 q30,-9 60,-2 q35,-8 70,-1 q30,-6 87,0 v22 h-267z" fill="#7a82ab" opacity="0.9"/>
 <path d="M1400,727 q30,-6 60,-2 q30,-4 60,0 q-20,6 -60,4z" fill="#c9c1cf" opacity="0.8"/>
 <path d="M1350,735 h267 v8 h-267z" fill="#b4b2bd"/>
 <path d="M1350,744 v-3 h30 v-2 h20 v2 h120 v-3 h40 v3 h57 v3z" fill="#6f6f68"/>
 <rect x="1350" y="743" width="267" height="148" fill="url(#grass3)"/>
 <path d="M1350,801 l74,90 h-74z" fill="#b9b8b4"/>
 <path d="M1350,828 l30,63 h-30z" fill="#3c3e44"/>
 <path d="M1381,761 l17,-28 l23,-4 l63,3 l51,29 l32,19 l11,25 l-1,37 l-24,19 l-70,9 l-9,5 l-30,-9 l-65,-60z" fill="#3d2a3d"/>
 <path d="M1433,734 l62,2 l42,34 l-83,3 l-21,-10z" fill="#454b5c"/><path d="M1470,745 l30,-2 l20,20 l-40,2z" fill="#6d7484" opacity="0.6"/>
 <path d="M1387,738 l46,-3 v35 l-46,-6z" fill="#4b5060"/>
 <path d="M1468,789 l44,6 l9,24 l-42,-3z" fill="#cfd2d6"/>
 <circle cx="1461" cy="847" r="19.5" fill="#1f1f22"/><circle cx="1461" cy="847" r="11" fill="#b8babd"/>
 <ellipse cx="1390" cy="800.6" rx="9" ry="14" fill="#1f1f22"/><ellipse cx="1390" cy="800.6" rx="5" ry="9" fill="#a9abae"/>
 <rect x="1580.8" y="789" width="11.6" height="32.4" fill="#8c9184"/>
 <rect x="1556" y="822" width="20" height="14" fill="#f4f4f4"/>
 <text x="1446.7" y="715" font-size="17" fill="#ea2a3a" textLength="93.7" lengthAdjust="spacingAndGlyphs">Test Sample</text>
</g>

</svg>
<div class="ph" style="left:855px">Type to search</div>
<div class="ph" style="left:969px">Sri Lanka</div>
<div class="bt" style="left:1145px;top:17px">Referral Program</div>
<div class="bt" style="left:1356px;top:17px">List Your Vehicle</div>
<div class="bt" style="left:1572px;top:17px">Rent A Vehicle</div>
<div class="abs" style="left:1802px;top:17px;font-size:16px;font-weight:bold;color:#0a4a4a;letter-spacing:0px">Kasun</div>
<div class="bt" style="left:107px;top:124px">Promote Vehicle</div>
<div class="abs" style="left:784px;top:105px;font-size:13px;color:#333;letter-spacing:1.55px">Earn an income from home, rent the vehicle next door and keep the money in our community</div>
<div class="abs" style="left:1052px;top:144px;font-size:16px;font-weight:bold;color:#111;letter-spacing:0.3px">Nearest Vehicles</div>
<div class="ttl" style="left:589px">Tonx Dyna LK</div>
<div class="ttl" style="left:952px">2018 Honda</div>
<div class="ttl" style="left:1315px">Toyota Ractis AL</div>
<div class="abs" style="left:1918px;top:0;width:1px;height:908px;background:#000"></div>
<svg class="abs" style="left:0;top:0;position:absolute" width="1919" height="908" viewBox="0 0 1919 908">
 <rect x="1865.5" y="9.5" width="52" height="41" fill="none" stroke="#ff5500" stroke-width="5"/>
 <line x1="1724.5" y1="163" x2="1832" y2="75" stroke="#ff5500" stroke-width="5.2"/>
 <path d="M1848.5,60.5 L1821.5,67.5 L1837.5,86z" fill="#ff5500"/>
</svg>

</body></html>
